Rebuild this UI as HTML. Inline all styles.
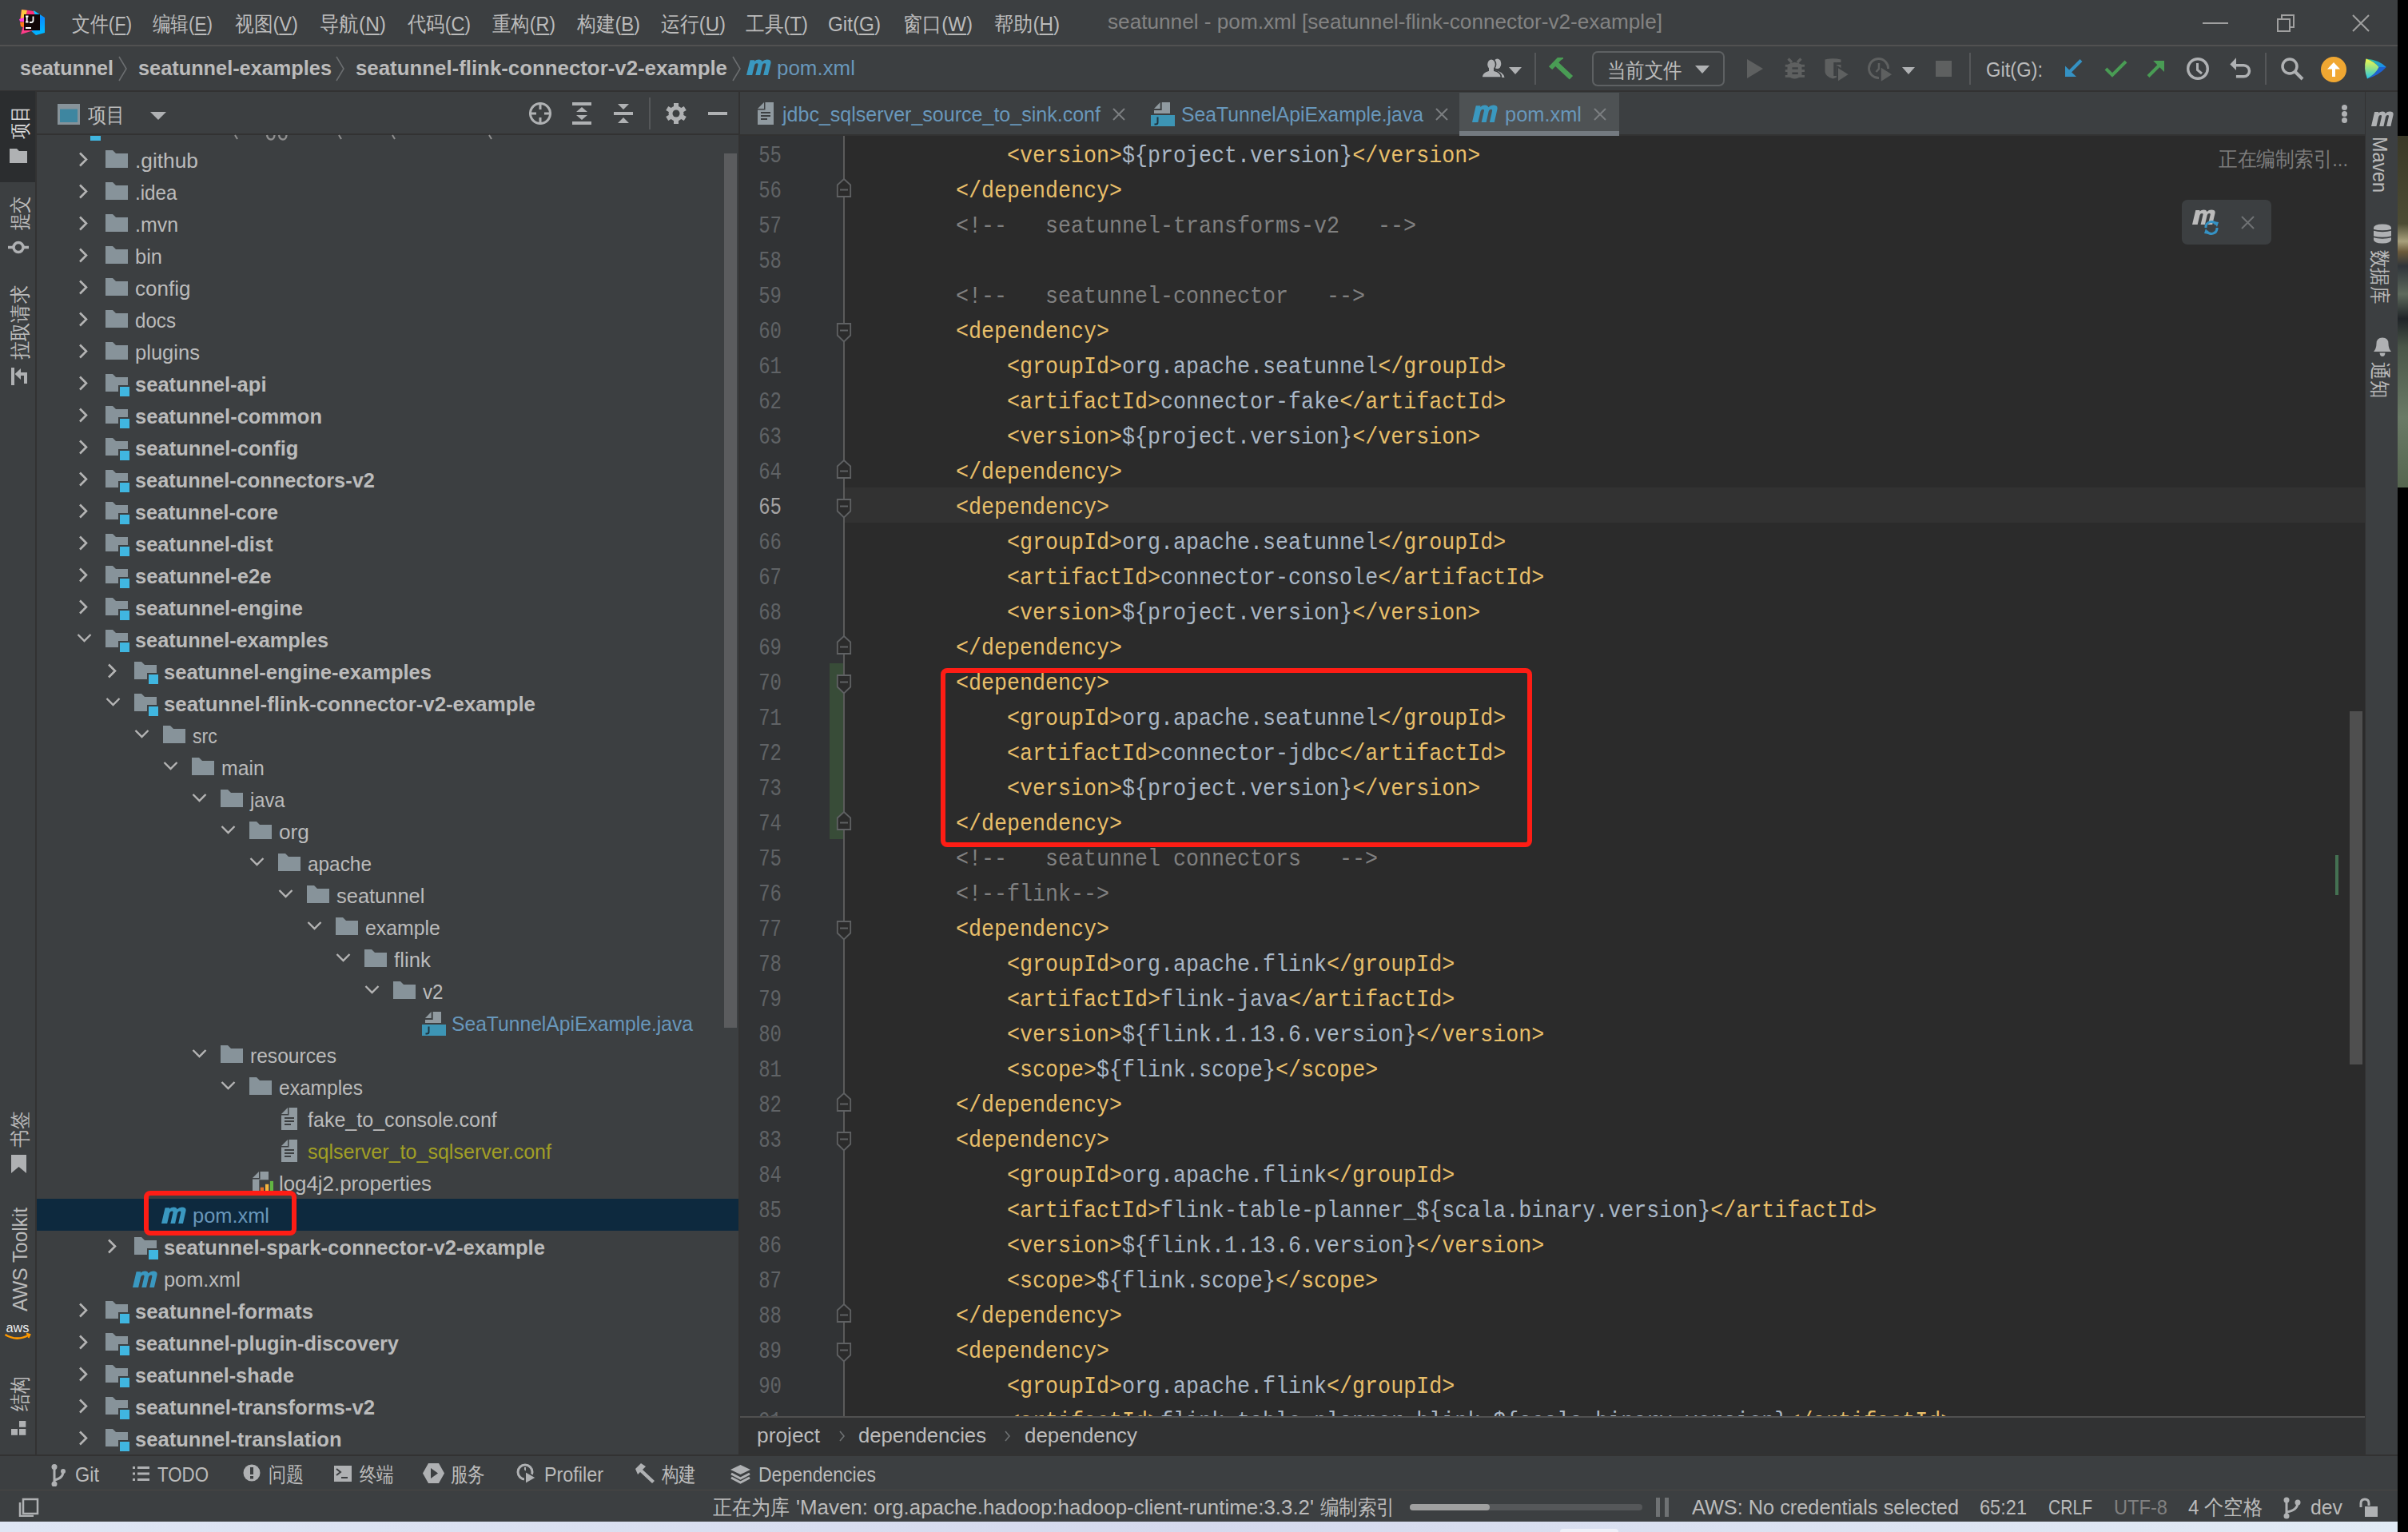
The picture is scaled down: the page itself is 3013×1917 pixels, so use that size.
<!DOCTYPE html>
<html><head><meta charset="utf-8"><style>
html,body{margin:0;padding:0;width:3013px;height:1917px;overflow:hidden;background:#000;}
div,svg{box-sizing:border-box;}
</style></head><body>
<div style="position:absolute;left:0px;top:0px;width:3000px;height:1904px;background:#3c3f41;"></div>
<div style="position:absolute;left:3000px;top:170px;width:13px;height:440px;background:linear-gradient(180deg,#3a3826 0%,#4d4c34 25%,#a8a07c 30%,#6b5a3a 33%,#30353a 37%,#5e6a5c 45%,#202428 52%,#4a5648 60%,#6a7a66 80%,#56664f 100%);"></div>
<div style="position:absolute;left:0px;top:1904px;width:3000px;height:13px;background:linear-gradient(90deg,#dfe6f4,#d5d9ed 50%,#e2ebf5);"></div>
<div style="position:absolute;left:1952px;top:1913px;width:73px;height:4px;background:#eef0f8;border-radius:6px 6px 0 0"></div>
<div style="position:absolute;left:0px;top:56px;width:3000px;height:2px;background:#515151;"></div>
<svg style="position:absolute;left:23px;top:11px;" width="34" height="34" viewBox="0 0 34 34">
<defs><linearGradient id="lgb" x1="0" y1="0" x2="0.3" y2="1"><stop offset="0" stop-color="#00e5ff"/><stop offset="0.5" stop-color="#0a8cff"/><stop offset="1" stop-color="#00b4ff"/></linearGradient></defs>
<polygon points="19,2 33,11 33,30 22,33 14,26 20,16" fill="url(#lgb)"/>
<polygon points="4,1 13,2 19,3 21,8 12,10 2,14" fill="#ff2f7a"/>
<polygon points="4,1 11,2 9,9 3,14" fill="#ffc83f"/>
<polygon points="1,13 10,10 13,17 2,16" fill="#ff3ddb"/>
<polygon points="2,17 12,16 12,26 3,22" fill="#ff7a1a"/>
<polygon points="3,32 6,22 13,25 22,26" fill="#ff3d8a"/>
<rect x="7" y="7" width="20" height="20" fill="#120606"/>
<path d="M9 9.5 H12.5 M10.7 9.5 V16.5 M9 16.5 H12.5" stroke="#fff" stroke-width="1.8"/>
<path d="M18.5 9.5 V14.5 Q18.5 17 16 17 H14" fill="none" stroke="#fff" stroke-width="1.8"/>
<rect x="9" y="23" width="7" height="2" fill="#fff"/>
</svg>
<div style="position:absolute;left:90px;top:9.99px;font:400 26px 'Liberation Sans', sans-serif;line-height:40px;color:#bbbbbb;white-space:pre;transform:scaleX(0.8802);transform-origin:0 0;">文件(<span style="text-decoration:underline;text-underline-offset:3px;text-decoration-thickness:2px">F</span>)</div>
<div style="position:absolute;left:191px;top:9.99px;font:400 26px 'Liberation Sans', sans-serif;line-height:40px;color:#bbbbbb;white-space:pre;transform:scaleX(0.8653);transform-origin:0 0;">编辑(<span style="text-decoration:underline;text-underline-offset:3px;text-decoration-thickness:2px">E</span>)</div>
<div style="position:absolute;left:294px;top:9.99px;font:400 26px 'Liberation Sans', sans-serif;line-height:40px;color:#bbbbbb;white-space:pre;transform:scaleX(0.9115);transform-origin:0 0;">视图(<span style="text-decoration:underline;text-underline-offset:3px;text-decoration-thickness:2px">V</span>)</div>
<div style="position:absolute;left:400px;top:9.99px;font:400 26px 'Liberation Sans', sans-serif;line-height:40px;color:#bbbbbb;white-space:pre;transform:scaleX(0.9422);transform-origin:0 0;">导航(<span style="text-decoration:underline;text-underline-offset:3px;text-decoration-thickness:2px">N</span>)</div>
<div style="position:absolute;left:510px;top:9.99px;font:400 26px 'Liberation Sans', sans-serif;line-height:40px;color:#bbbbbb;white-space:pre;transform:scaleX(0.8968);transform-origin:0 0;">代码(<span style="text-decoration:underline;text-underline-offset:3px;text-decoration-thickness:2px">C</span>)</div>
<div style="position:absolute;left:616px;top:9.99px;font:400 26px 'Liberation Sans', sans-serif;line-height:40px;color:#bbbbbb;white-space:pre;transform:scaleX(0.8968);transform-origin:0 0;">重构(<span style="text-decoration:underline;text-underline-offset:3px;text-decoration-thickness:2px">R</span>)</div>
<div style="position:absolute;left:722px;top:9.99px;font:400 26px 'Liberation Sans', sans-serif;line-height:40px;color:#bbbbbb;white-space:pre;transform:scaleX(0.9115);transform-origin:0 0;">构建(<span style="text-decoration:underline;text-underline-offset:3px;text-decoration-thickness:2px">B</span>)</div>
<div style="position:absolute;left:827px;top:9.99px;font:400 26px 'Liberation Sans', sans-serif;line-height:40px;color:#bbbbbb;white-space:pre;transform:scaleX(0.9195);transform-origin:0 0;">运行(<span style="text-decoration:underline;text-underline-offset:3px;text-decoration-thickness:2px">U</span>)</div>
<div style="position:absolute;left:933px;top:9.99px;font:400 26px 'Liberation Sans', sans-serif;line-height:40px;color:#bbbbbb;white-space:pre;transform:scaleX(0.9155);transform-origin:0 0;">工具(<span style="text-decoration:underline;text-underline-offset:3px;text-decoration-thickness:2px">T</span>)</div>
<div style="position:absolute;left:1036px;top:9.99px;font:400 26px 'Liberation Sans', sans-serif;line-height:40px;color:#bbbbbb;white-space:pre;transform:scaleX(0.9327);transform-origin:0 0;">Git(<span style="text-decoration:underline;text-underline-offset:3px;text-decoration-thickness:2px">G</span>)</div>
<div style="position:absolute;left:1130px;top:9.99px;font:400 26px 'Liberation Sans', sans-serif;line-height:40px;color:#bbbbbb;white-space:pre;transform:scaleX(0.9269);transform-origin:0 0;">窗口(<span style="text-decoration:underline;text-underline-offset:3px;text-decoration-thickness:2px">W</span>)</div>
<div style="position:absolute;left:1244px;top:9.99px;font:400 26px 'Liberation Sans', sans-serif;line-height:40px;color:#bbbbbb;white-space:pre;transform:scaleX(0.9308);transform-origin:0 0;">帮助(<span style="text-decoration:underline;text-underline-offset:3px;text-decoration-thickness:2px">H</span>)</div>
<div style="position:absolute;left:1386px;top:6.99px;font:400 26px 'Liberation Sans', sans-serif;line-height:40px;color:#838383;white-space:pre;transform:scaleX(1.0068);transform-origin:0 0;">seatunnel - pom.xml [seatunnel-flink-connector-v2-example]</div>
<div style="position:absolute;left:2756px;top:28px;width:32px;height:2px;background:#a0a0a0;"></div>
<svg style="position:absolute;left:2849px;top:18px;" width="24" height="22" viewBox="0 0 24 22"><rect x="1" y="6" width="15" height="15" fill="none" stroke="#a0a0a0" stroke-width="2"/><path d="M6 6 V1 H21 V16 H16" fill="none" stroke="#a0a0a0" stroke-width="2"/></svg>
<svg style="position:absolute;left:2943px;top:18px;" width="22" height="22" viewBox="0 0 22 22"><path d="M1 1 L21 21 M21 1 L1 21" stroke="#a0a0a0" stroke-width="2"/></svg>
<div style="position:absolute;left:0px;top:113px;width:3000px;height:2px;background:#323232;"></div>
<div style="position:absolute;left:25px;top:64.99px;font:700 26px 'Liberation Sans', sans-serif;line-height:40px;color:#bbbbbb;white-space:pre;transform:scaleX(0.9640);transform-origin:0 0;">seatunnel</div>
<div style="position:absolute;left:173px;top:64.99px;font:700 26px 'Liberation Sans', sans-serif;line-height:40px;color:#bbbbbb;white-space:pre;transform:scaleX(0.9736);transform-origin:0 0;">seatunnel-examples</div>
<div style="position:absolute;left:445px;top:64.99px;font:700 26px 'Liberation Sans', sans-serif;line-height:40px;color:#bbbbbb;white-space:pre;transform:scaleX(0.9933);transform-origin:0 0;">seatunnel-flink-connector-v2-example</div>
<svg style="position:absolute;left:148px;top:70px;" width="12" height="32" viewBox="0 0 12 32"><path d="M1 1 L10 16 L1 31" fill="none" stroke="#6b6e70" stroke-width="1.6"/></svg>
<svg style="position:absolute;left:420px;top:70px;" width="12" height="32" viewBox="0 0 12 32"><path d="M1 1 L10 16 L1 31" fill="none" stroke="#6b6e70" stroke-width="1.6"/></svg>
<svg style="position:absolute;left:916px;top:70px;" width="12" height="32" viewBox="0 0 12 32"><path d="M1 1 L10 16 L1 31" fill="none" stroke="#6b6e70" stroke-width="1.6"/></svg>
<div style="position:absolute;left:972px;top:64.99px;font:400 26px 'Liberation Sans', sans-serif;line-height:40px;color:#6897bb;white-space:pre;transform:scaleX(0.9975);transform-origin:0 0;">pom.xml</div>
<!--nav-right-->
<div style="position:absolute;left:44px;top:114px;width:2px;height:1706px;background:#323232;"></div>
<div style="position:absolute;left:0px;top:114px;width:44px;height:114px;background:#2b2d2f;"></div>
<div style="position:absolute;left:46px;top:167px;width:878px;height:2px;background:#323232;"></div>
<div style="position:absolute;left:924px;top:114px;width:2px;height:1706px;background:#323232;"></div>
<div style="position:absolute;left:926px;top:168px;width:2034px;height:2px;background:#323232;"></div>
<div style="position:absolute;left:926px;top:170px;width:130px;height:1602px;background:#313335;"></div>
<div style="position:absolute;left:1056px;top:170px;width:1904px;height:1602px;background:#2b2b2b;"></div>
<div style="position:absolute;left:1056px;top:610px;width:1904px;height:44px;background:#323232;"></div>
<div style="position:absolute;left:926px;top:1772px;width:2034px;height:2px;background:#505050;"></div>
<div style="position:absolute;left:926px;top:1774px;width:2034px;height:46px;background:#313233;"></div>
<div style="position:absolute;left:2959px;top:114px;width:1px;height:1706px;background:#323232;"></div>
<div style="position:absolute;left:0px;top:1820px;width:3000px;height:2px;background:#323232;"></div>
<div style="position:absolute;left:0px;top:1864px;width:3000px;height:1px;background:#4a4744;"></div>
<div style="position:absolute;left:46px;top:1500px;width:878px;height:40px;background:#0d293e;"></div>
<div style="position:absolute;left:113px;top:170px;width:13px;height:6px;background:#40b6e0;"></div>
<svg style="position:absolute;left:330px;top:168px;" width="32" height="9" viewBox="0 0 32 9"><path d="M4 1 Q5 6.5 9 6.5 Q13 6.5 13.5 1 M19 1 Q20 6.5 24 6.5 Q28 6.5 28.5 1" fill="none" stroke="#8f8f8f" stroke-width="2.4"/></svg>
<svg style="position:absolute;left:293px;top:168px;" width="6" height="8" viewBox="0 0 6 8"><path d="M1 1 L4 6" stroke="#8f8f8f" stroke-width="2"/></svg>
<svg style="position:absolute;left:423px;top:168px;" width="6" height="8" viewBox="0 0 6 8"><path d="M1 1 L4 6" stroke="#8f8f8f" stroke-width="2"/></svg>
<svg style="position:absolute;left:490px;top:168px;" width="6" height="8" viewBox="0 0 6 8"><path d="M1 1 L4 6" stroke="#8f8f8f" stroke-width="2"/></svg>
<svg style="position:absolute;left:611px;top:168px;" width="6" height="8" viewBox="0 0 6 8"><path d="M1 1 L4 6" stroke="#8f8f8f" stroke-width="2"/></svg>
<svg style="position:absolute;left:98px;top:190px;" width="13" height="20" viewBox="0 0 13 20"><path d="M2 1.5 L10 9.5 L2 17.5" fill="none" stroke="#b4b4b4" stroke-width="2.6"/></svg>
<svg style="position:absolute;left:132px;top:188px;" width="28" height="22" viewBox="0 0 28 22"><path d="M0 0 H9 L13 4 H28 V22 H0 Z" fill="#87939a"/></svg>
<div style="position:absolute;left:169px;top:180.99px;font:400 26px 'Liberation Sans', sans-serif;line-height:40px;color:#bbbbbb;white-space:pre;transform:scaleX(1.0118);transform-origin:0 0;">.github</div>
<svg style="position:absolute;left:98px;top:230px;" width="13" height="20" viewBox="0 0 13 20"><path d="M2 1.5 L10 9.5 L2 17.5" fill="none" stroke="#b4b4b4" stroke-width="2.6"/></svg>
<svg style="position:absolute;left:132px;top:228px;" width="28" height="22" viewBox="0 0 28 22"><path d="M0 0 H9 L13 4 H28 V22 H0 Z" fill="#87939a"/></svg>
<div style="position:absolute;left:169px;top:220.99px;font:400 26px 'Liberation Sans', sans-serif;line-height:40px;color:#bbbbbb;white-space:pre;transform:scaleX(0.9310);transform-origin:0 0;">.idea</div>
<svg style="position:absolute;left:98px;top:270px;" width="13" height="20" viewBox="0 0 13 20"><path d="M2 1.5 L10 9.5 L2 17.5" fill="none" stroke="#b4b4b4" stroke-width="2.6"/></svg>
<svg style="position:absolute;left:132px;top:268px;" width="28" height="22" viewBox="0 0 28 22"><path d="M0 0 H9 L13 4 H28 V22 H0 Z" fill="#87939a"/></svg>
<div style="position:absolute;left:169px;top:260.99px;font:400 26px 'Liberation Sans', sans-serif;line-height:40px;color:#bbbbbb;white-space:pre;transform:scaleX(0.9584);transform-origin:0 0;">.mvn</div>
<svg style="position:absolute;left:98px;top:310px;" width="13" height="20" viewBox="0 0 13 20"><path d="M2 1.5 L10 9.5 L2 17.5" fill="none" stroke="#b4b4b4" stroke-width="2.6"/></svg>
<svg style="position:absolute;left:132px;top:308px;" width="28" height="22" viewBox="0 0 28 22"><path d="M0 0 H9 L13 4 H28 V22 H0 Z" fill="#87939a"/></svg>
<div style="position:absolute;left:169px;top:300.99px;font:400 26px 'Liberation Sans', sans-serif;line-height:40px;color:#bbbbbb;white-space:pre;transform:scaleX(0.9797);transform-origin:0 0;">bin</div>
<svg style="position:absolute;left:98px;top:350px;" width="13" height="20" viewBox="0 0 13 20"><path d="M2 1.5 L10 9.5 L2 17.5" fill="none" stroke="#b4b4b4" stroke-width="2.6"/></svg>
<svg style="position:absolute;left:132px;top:348px;" width="28" height="22" viewBox="0 0 28 22"><path d="M0 0 H9 L13 4 H28 V22 H0 Z" fill="#87939a"/></svg>
<div style="position:absolute;left:169px;top:340.99px;font:400 26px 'Liberation Sans', sans-serif;line-height:40px;color:#bbbbbb;white-space:pre;transform:scaleX(1.0016);transform-origin:0 0;">config</div>
<svg style="position:absolute;left:98px;top:390px;" width="13" height="20" viewBox="0 0 13 20"><path d="M2 1.5 L10 9.5 L2 17.5" fill="none" stroke="#b4b4b4" stroke-width="2.6"/></svg>
<svg style="position:absolute;left:132px;top:388px;" width="28" height="22" viewBox="0 0 28 22"><path d="M0 0 H9 L13 4 H28 V22 H0 Z" fill="#87939a"/></svg>
<div style="position:absolute;left:169px;top:380.99px;font:400 26px 'Liberation Sans', sans-serif;line-height:40px;color:#bbbbbb;white-space:pre;transform:scaleX(0.9286);transform-origin:0 0;">docs</div>
<svg style="position:absolute;left:98px;top:430px;" width="13" height="20" viewBox="0 0 13 20"><path d="M2 1.5 L10 9.5 L2 17.5" fill="none" stroke="#b4b4b4" stroke-width="2.6"/></svg>
<svg style="position:absolute;left:132px;top:428px;" width="28" height="22" viewBox="0 0 28 22"><path d="M0 0 H9 L13 4 H28 V22 H0 Z" fill="#87939a"/></svg>
<div style="position:absolute;left:169px;top:420.99px;font:400 26px 'Liberation Sans', sans-serif;line-height:40px;color:#bbbbbb;white-space:pre;transform:scaleX(0.9829);transform-origin:0 0;">plugins</div>
<svg style="position:absolute;left:98px;top:470px;" width="13" height="20" viewBox="0 0 13 20"><path d="M2 1.5 L10 9.5 L2 17.5" fill="none" stroke="#b4b4b4" stroke-width="2.6"/></svg>
<svg style="position:absolute;left:132px;top:468px;" width="31" height="29" viewBox="0 0 31 29"><path d="M0 0 H9 L13 4 H28 V14 H16 V22 H0 Z" fill="#87939a"/><rect x="18" y="16" width="12" height="12" fill="#40b6e0"/></svg>
<div style="position:absolute;left:169px;top:460.99px;font:700 26px 'Liberation Sans', sans-serif;line-height:40px;color:#bbbbbb;white-space:pre;transform:scaleX(0.9815);transform-origin:0 0;">seatunnel-api</div>
<svg style="position:absolute;left:98px;top:510px;" width="13" height="20" viewBox="0 0 13 20"><path d="M2 1.5 L10 9.5 L2 17.5" fill="none" stroke="#b4b4b4" stroke-width="2.6"/></svg>
<svg style="position:absolute;left:132px;top:508px;" width="31" height="29" viewBox="0 0 31 29"><path d="M0 0 H9 L13 4 H28 V14 H16 V22 H0 Z" fill="#87939a"/><rect x="18" y="16" width="12" height="12" fill="#40b6e0"/></svg>
<div style="position:absolute;left:169px;top:500.99px;font:700 26px 'Liberation Sans', sans-serif;line-height:40px;color:#bbbbbb;white-space:pre;transform:scaleX(0.9816);transform-origin:0 0;">seatunnel-common</div>
<svg style="position:absolute;left:98px;top:550px;" width="13" height="20" viewBox="0 0 13 20"><path d="M2 1.5 L10 9.5 L2 17.5" fill="none" stroke="#b4b4b4" stroke-width="2.6"/></svg>
<svg style="position:absolute;left:132px;top:548px;" width="31" height="29" viewBox="0 0 31 29"><path d="M0 0 H9 L13 4 H28 V14 H16 V22 H0 Z" fill="#87939a"/><rect x="18" y="16" width="12" height="12" fill="#40b6e0"/></svg>
<div style="position:absolute;left:169px;top:540.99px;font:700 26px 'Liberation Sans', sans-serif;line-height:40px;color:#bbbbbb;white-space:pre;transform:scaleX(0.9826);transform-origin:0 0;">seatunnel-config</div>
<svg style="position:absolute;left:98px;top:590px;" width="13" height="20" viewBox="0 0 13 20"><path d="M2 1.5 L10 9.5 L2 17.5" fill="none" stroke="#b4b4b4" stroke-width="2.6"/></svg>
<svg style="position:absolute;left:132px;top:588px;" width="31" height="29" viewBox="0 0 31 29"><path d="M0 0 H9 L13 4 H28 V14 H16 V22 H0 Z" fill="#87939a"/><rect x="18" y="16" width="12" height="12" fill="#40b6e0"/></svg>
<div style="position:absolute;left:169px;top:580.99px;font:700 26px 'Liberation Sans', sans-serif;line-height:40px;color:#bbbbbb;white-space:pre;transform:scaleX(0.9742);transform-origin:0 0;">seatunnel-connectors-v2</div>
<svg style="position:absolute;left:98px;top:630px;" width="13" height="20" viewBox="0 0 13 20"><path d="M2 1.5 L10 9.5 L2 17.5" fill="none" stroke="#b4b4b4" stroke-width="2.6"/></svg>
<svg style="position:absolute;left:132px;top:628px;" width="31" height="29" viewBox="0 0 31 29"><path d="M0 0 H9 L13 4 H28 V14 H16 V22 H0 Z" fill="#87939a"/><rect x="18" y="16" width="12" height="12" fill="#40b6e0"/></svg>
<div style="position:absolute;left:169px;top:620.99px;font:700 26px 'Liberation Sans', sans-serif;line-height:40px;color:#bbbbbb;white-space:pre;transform:scaleX(0.9678);transform-origin:0 0;">seatunnel-core</div>
<svg style="position:absolute;left:98px;top:670px;" width="13" height="20" viewBox="0 0 13 20"><path d="M2 1.5 L10 9.5 L2 17.5" fill="none" stroke="#b4b4b4" stroke-width="2.6"/></svg>
<svg style="position:absolute;left:132px;top:668px;" width="31" height="29" viewBox="0 0 31 29"><path d="M0 0 H9 L13 4 H28 V14 H16 V22 H0 Z" fill="#87939a"/><rect x="18" y="16" width="12" height="12" fill="#40b6e0"/></svg>
<div style="position:absolute;left:169px;top:660.99px;font:700 26px 'Liberation Sans', sans-serif;line-height:40px;color:#bbbbbb;white-space:pre;transform:scaleX(0.9787);transform-origin:0 0;">seatunnel-dist</div>
<svg style="position:absolute;left:98px;top:710px;" width="13" height="20" viewBox="0 0 13 20"><path d="M2 1.5 L10 9.5 L2 17.5" fill="none" stroke="#b4b4b4" stroke-width="2.6"/></svg>
<svg style="position:absolute;left:132px;top:708px;" width="31" height="29" viewBox="0 0 31 29"><path d="M0 0 H9 L13 4 H28 V14 H16 V22 H0 Z" fill="#87939a"/><rect x="18" y="16" width="12" height="12" fill="#40b6e0"/></svg>
<div style="position:absolute;left:169px;top:700.99px;font:700 26px 'Liberation Sans', sans-serif;line-height:40px;color:#bbbbbb;white-space:pre;transform:scaleX(0.9827);transform-origin:0 0;">seatunnel-e2e</div>
<svg style="position:absolute;left:98px;top:750px;" width="13" height="20" viewBox="0 0 13 20"><path d="M2 1.5 L10 9.5 L2 17.5" fill="none" stroke="#b4b4b4" stroke-width="2.6"/></svg>
<svg style="position:absolute;left:132px;top:748px;" width="31" height="29" viewBox="0 0 31 29"><path d="M0 0 H9 L13 4 H28 V14 H16 V22 H0 Z" fill="#87939a"/><rect x="18" y="16" width="12" height="12" fill="#40b6e0"/></svg>
<div style="position:absolute;left:169px;top:740.99px;font:700 26px 'Liberation Sans', sans-serif;line-height:40px;color:#bbbbbb;white-space:pre;transform:scaleX(0.9821);transform-origin:0 0;">seatunnel-engine</div>
<svg style="position:absolute;left:95.5px;top:792px;" width="19" height="13" viewBox="0 0 19 13"><path d="M1.5 2 L9.5 10 L17.5 2" fill="none" stroke="#b4b4b4" stroke-width="2.4"/></svg>
<svg style="position:absolute;left:132px;top:788px;" width="31" height="29" viewBox="0 0 31 29"><path d="M0 0 H9 L13 4 H28 V14 H16 V22 H0 Z" fill="#87939a"/><rect x="18" y="16" width="12" height="12" fill="#40b6e0"/></svg>
<div style="position:absolute;left:169px;top:780.99px;font:700 26px 'Liberation Sans', sans-serif;line-height:40px;color:#bbbbbb;white-space:pre;transform:scaleX(0.9736);transform-origin:0 0;">seatunnel-examples</div>
<svg style="position:absolute;left:134px;top:830px;" width="13" height="20" viewBox="0 0 13 20"><path d="M2 1.5 L10 9.5 L2 17.5" fill="none" stroke="#b4b4b4" stroke-width="2.6"/></svg>
<svg style="position:absolute;left:168px;top:828px;" width="31" height="29" viewBox="0 0 31 29"><path d="M0 0 H9 L13 4 H28 V14 H16 V22 H0 Z" fill="#87939a"/><rect x="18" y="16" width="12" height="12" fill="#40b6e0"/></svg>
<div style="position:absolute;left:205px;top:820.99px;font:700 26px 'Liberation Sans', sans-serif;line-height:40px;color:#bbbbbb;white-space:pre;transform:scaleX(0.9824);transform-origin:0 0;">seatunnel-engine-examples</div>
<svg style="position:absolute;left:131.5px;top:872px;" width="19" height="13" viewBox="0 0 19 13"><path d="M1.5 2 L9.5 10 L17.5 2" fill="none" stroke="#b4b4b4" stroke-width="2.4"/></svg>
<svg style="position:absolute;left:168px;top:868px;" width="31" height="29" viewBox="0 0 31 29"><path d="M0 0 H9 L13 4 H28 V14 H16 V22 H0 Z" fill="#87939a"/><rect x="18" y="16" width="12" height="12" fill="#40b6e0"/></svg>
<div style="position:absolute;left:205px;top:860.99px;font:700 26px 'Liberation Sans', sans-serif;line-height:40px;color:#bbbbbb;white-space:pre;transform:scaleX(0.9933);transform-origin:0 0;">seatunnel-flink-connector-v2-example</div>
<svg style="position:absolute;left:167.5px;top:912px;" width="19" height="13" viewBox="0 0 19 13"><path d="M1.5 2 L9.5 10 L17.5 2" fill="none" stroke="#b4b4b4" stroke-width="2.4"/></svg>
<svg style="position:absolute;left:204px;top:908px;" width="28" height="22" viewBox="0 0 28 22"><path d="M0 0 H9 L13 4 H28 V22 H0 Z" fill="#87939a"/></svg>
<div style="position:absolute;left:241px;top:900.99px;font:400 26px 'Liberation Sans', sans-serif;line-height:40px;color:#bbbbbb;white-space:pre;transform:scaleX(0.8854);transform-origin:0 0;">src</div>
<svg style="position:absolute;left:203.5px;top:952px;" width="19" height="13" viewBox="0 0 19 13"><path d="M1.5 2 L9.5 10 L17.5 2" fill="none" stroke="#b4b4b4" stroke-width="2.4"/></svg>
<svg style="position:absolute;left:240px;top:948px;" width="28" height="22" viewBox="0 0 28 22"><path d="M0 0 H9 L13 4 H28 V22 H0 Z" fill="#87939a"/></svg>
<div style="position:absolute;left:277px;top:940.99px;font:400 26px 'Liberation Sans', sans-serif;line-height:40px;color:#bbbbbb;white-space:pre;transform:scaleX(0.9528);transform-origin:0 0;">main</div>
<svg style="position:absolute;left:239.5px;top:992px;" width="19" height="13" viewBox="0 0 19 13"><path d="M1.5 2 L9.5 10 L17.5 2" fill="none" stroke="#b4b4b4" stroke-width="2.4"/></svg>
<svg style="position:absolute;left:276px;top:988px;" width="28" height="22" viewBox="0 0 28 22"><path d="M0 0 H9 L13 4 H28 V22 H0 Z" fill="#87939a"/></svg>
<div style="position:absolute;left:313px;top:980.99px;font:400 26px 'Liberation Sans', sans-serif;line-height:40px;color:#bbbbbb;white-space:pre;transform:scaleX(0.9119);transform-origin:0 0;">java</div>
<svg style="position:absolute;left:275.5px;top:1032px;" width="19" height="13" viewBox="0 0 19 13"><path d="M1.5 2 L9.5 10 L17.5 2" fill="none" stroke="#b4b4b4" stroke-width="2.4"/></svg>
<svg style="position:absolute;left:312px;top:1028px;" width="28" height="22" viewBox="0 0 28 22"><path d="M0 0 H9 L13 4 H28 V22 H0 Z" fill="#87939a"/></svg>
<div style="position:absolute;left:349px;top:1020.99px;font:400 26px 'Liberation Sans', sans-serif;line-height:40px;color:#bbbbbb;white-space:pre;transform:scaleX(1.0059);transform-origin:0 0;">org</div>
<svg style="position:absolute;left:311.5px;top:1072px;" width="19" height="13" viewBox="0 0 19 13"><path d="M1.5 2 L9.5 10 L17.5 2" fill="none" stroke="#b4b4b4" stroke-width="2.4"/></svg>
<svg style="position:absolute;left:348px;top:1068px;" width="28" height="22" viewBox="0 0 28 22"><path d="M0 0 H9 L13 4 H28 V22 H0 Z" fill="#87939a"/></svg>
<div style="position:absolute;left:385px;top:1060.99px;font:400 26px 'Liberation Sans', sans-serif;line-height:40px;color:#bbbbbb;white-space:pre;transform:scaleX(0.9377);transform-origin:0 0;">apache</div>
<svg style="position:absolute;left:347.5px;top:1112px;" width="19" height="13" viewBox="0 0 19 13"><path d="M1.5 2 L9.5 10 L17.5 2" fill="none" stroke="#b4b4b4" stroke-width="2.4"/></svg>
<svg style="position:absolute;left:384px;top:1108px;" width="28" height="22" viewBox="0 0 28 22"><path d="M0 0 H9 L13 4 H28 V22 H0 Z" fill="#87939a"/></svg>
<div style="position:absolute;left:421px;top:1100.99px;font:400 26px 'Liberation Sans', sans-serif;line-height:40px;color:#bbbbbb;white-space:pre;transform:scaleX(0.9790);transform-origin:0 0;">seatunnel</div>
<svg style="position:absolute;left:383.5px;top:1152px;" width="19" height="13" viewBox="0 0 19 13"><path d="M1.5 2 L9.5 10 L17.5 2" fill="none" stroke="#b4b4b4" stroke-width="2.4"/></svg>
<svg style="position:absolute;left:420px;top:1148px;" width="28" height="22" viewBox="0 0 28 22"><path d="M0 0 H9 L13 4 H28 V22 H0 Z" fill="#87939a"/></svg>
<div style="position:absolute;left:457px;top:1140.99px;font:400 26px 'Liberation Sans', sans-serif;line-height:40px;color:#bbbbbb;white-space:pre;transform:scaleX(0.9544);transform-origin:0 0;">example</div>
<svg style="position:absolute;left:419.5px;top:1192px;" width="19" height="13" viewBox="0 0 19 13"><path d="M1.5 2 L9.5 10 L17.5 2" fill="none" stroke="#b4b4b4" stroke-width="2.4"/></svg>
<svg style="position:absolute;left:456px;top:1188px;" width="28" height="22" viewBox="0 0 28 22"><path d="M0 0 H9 L13 4 H28 V22 H0 Z" fill="#87939a"/></svg>
<div style="position:absolute;left:493px;top:1180.99px;font:400 26px 'Liberation Sans', sans-serif;line-height:40px;color:#bbbbbb;white-space:pre;transform:scaleX(0.9924);transform-origin:0 0;">flink</div>
<svg style="position:absolute;left:455.5px;top:1232px;" width="19" height="13" viewBox="0 0 19 13"><path d="M1.5 2 L9.5 10 L17.5 2" fill="none" stroke="#b4b4b4" stroke-width="2.4"/></svg>
<svg style="position:absolute;left:492px;top:1228px;" width="28" height="22" viewBox="0 0 28 22"><path d="M0 0 H9 L13 4 H28 V22 H0 Z" fill="#87939a"/></svg>
<div style="position:absolute;left:529px;top:1220.99px;font:400 26px 'Liberation Sans', sans-serif;line-height:40px;color:#bbbbbb;white-space:pre;transform:scaleX(0.9320);transform-origin:0 0;">v2</div>
<svg style="position:absolute;left:528px;top:1266px;" width="30" height="30" viewBox="0 0 30 30"><path d="M4 8 L11.7 0 V8 Z" fill="#909aa0"/><path d="M13.7 0 H24 V14 H4 V10 H13.7 Z" fill="#909aa0"/><rect x="0" y="16" width="30" height="14" fill="#3d95b5"/><path d="M8.5 18.5 V25.3 Q8.5 27.5 6.2 27.5 H4.5" fill="none" stroke="#1f3540" stroke-width="2"/></svg>
<div style="position:absolute;left:565px;top:1260.99px;font:400 26px 'Liberation Sans', sans-serif;line-height:40px;color:#6897bb;white-space:pre;transform:scaleX(0.9483);transform-origin:0 0;">SeaTunnelApiExample.java</div>
<svg style="position:absolute;left:239.5px;top:1312px;" width="19" height="13" viewBox="0 0 19 13"><path d="M1.5 2 L9.5 10 L17.5 2" fill="none" stroke="#b4b4b4" stroke-width="2.4"/></svg>
<svg style="position:absolute;left:276px;top:1308px;" width="28" height="22" viewBox="0 0 28 22"><path d="M0 0 H9 L13 4 H28 V22 H0 Z" fill="#87939a"/></svg>
<div style="position:absolute;left:313px;top:1300.99px;font:400 26px 'Liberation Sans', sans-serif;line-height:40px;color:#bbbbbb;white-space:pre;transform:scaleX(0.9461);transform-origin:0 0;">resources</div>
<svg style="position:absolute;left:275.5px;top:1352px;" width="19" height="13" viewBox="0 0 19 13"><path d="M1.5 2 L9.5 10 L17.5 2" fill="none" stroke="#b4b4b4" stroke-width="2.4"/></svg>
<svg style="position:absolute;left:312px;top:1348px;" width="28" height="22" viewBox="0 0 28 22"><path d="M0 0 H9 L13 4 H28 V22 H0 Z" fill="#87939a"/></svg>
<div style="position:absolute;left:349px;top:1340.99px;font:400 26px 'Liberation Sans', sans-serif;line-height:40px;color:#bbbbbb;white-space:pre;transform:scaleX(0.9436);transform-origin:0 0;">examples</div>
<svg style="position:absolute;left:352px;top:1386px;" width="20" height="28" viewBox="0 0 20 28"><path d="M0 8 L8 0 V8 Z" fill="#909aa0"/><path d="M9.5 0 H20 V28 H0 V9.5 H9.5 Z" fill="#909aa0"/><path d="M4 13 H16 M4 17 H16 M4 21 H12" stroke="#3c3f41" stroke-width="2"/></svg>
<div style="position:absolute;left:385px;top:1380.99px;font:400 26px 'Liberation Sans', sans-serif;line-height:40px;color:#bbbbbb;white-space:pre;transform:scaleX(0.9636);transform-origin:0 0;">fake_to_console.conf</div>
<svg style="position:absolute;left:352px;top:1426px;" width="20" height="28" viewBox="0 0 20 28"><path d="M0 8 L8 0 V8 Z" fill="#909aa0"/><path d="M9.5 0 H20 V28 H0 V9.5 H9.5 Z" fill="#909aa0"/><path d="M4 13 H16 M4 17 H16 M4 21 H12" stroke="#3c3f41" stroke-width="2"/></svg>
<div style="position:absolute;left:385px;top:1420.99px;font:400 26px 'Liberation Sans', sans-serif;line-height:40px;color:#a19f25;white-space:pre;transform:scaleX(0.9637);transform-origin:0 0;">sqlserver_to_sqlserver.conf</div>
<svg style="position:absolute;left:316px;top:1466px;" width="27" height="28" viewBox="0 0 27 28"><path d="M0 8 L8 0 V8 Z" fill="#909aa0"/><path d="M9.5 0 H20 V10.3 H8.3 V28 H0 V9.5 H9.5 Z" fill="#909aa0"/><rect x="9.7" y="19.7" width="4.3" height="8.3" fill="#e86f24"/><rect x="16" y="15.8" width="4.2" height="12.2" fill="#f4b63f"/><rect x="21.9" y="11.9" width="4.1" height="16.1" fill="#62b543"/></svg>
<div style="position:absolute;left:349px;top:1460.99px;font:400 26px 'Liberation Sans', sans-serif;line-height:40px;color:#bbbbbb;white-space:pre;transform:scaleX(0.9936);transform-origin:0 0;">log4j2.properties</div>
<svg style="position:absolute;left:202px;top:1510px" width="31" height="21" viewBox="0 0 29 21" preserveAspectRatio="none"><path d="M0 21 L4.3 1.2 H9.5 L9.2 2.8 Q11.5 0.5 14.5 0.5 Q17.8 0.5 18.3 3.2 Q20.8 0.5 24 0.5 Q29.5 0.5 28.5 5.5 L25.2 21 H19.8 L22.7 7.5 Q23.1 5.5 21.4 5.5 Q19.3 5.5 18.7 8 L16 21 H10.6 L13.5 7.5 Q13.9 5.5 12.2 5.5 Q10.1 5.5 9.5 8 L6.7 21 Z" fill="#3a98c0"/></svg>
<div style="position:absolute;left:241px;top:1500.99px;font:400 26px 'Liberation Sans', sans-serif;line-height:40px;color:#6897bb;white-space:pre;transform:scaleX(0.9771);transform-origin:0 0;">pom.xml</div>
<svg style="position:absolute;left:134px;top:1550px;" width="13" height="20" viewBox="0 0 13 20"><path d="M2 1.5 L10 9.5 L2 17.5" fill="none" stroke="#b4b4b4" stroke-width="2.6"/></svg>
<svg style="position:absolute;left:168px;top:1548px;" width="31" height="29" viewBox="0 0 31 29"><path d="M0 0 H9 L13 4 H28 V14 H16 V22 H0 Z" fill="#87939a"/><rect x="18" y="16" width="12" height="12" fill="#40b6e0"/></svg>
<div style="position:absolute;left:205px;top:1540.99px;font:700 26px 'Liberation Sans', sans-serif;line-height:40px;color:#bbbbbb;white-space:pre;transform:scaleX(0.9854);transform-origin:0 0;">seatunnel-spark-connector-v2-example</div>
<svg style="position:absolute;left:166px;top:1590px" width="31" height="21" viewBox="0 0 29 21" preserveAspectRatio="none"><path d="M0 21 L4.3 1.2 H9.5 L9.2 2.8 Q11.5 0.5 14.5 0.5 Q17.8 0.5 18.3 3.2 Q20.8 0.5 24 0.5 Q29.5 0.5 28.5 5.5 L25.2 21 H19.8 L22.7 7.5 Q23.1 5.5 21.4 5.5 Q19.3 5.5 18.7 8 L16 21 H10.6 L13.5 7.5 Q13.9 5.5 12.2 5.5 Q10.1 5.5 9.5 8 L6.7 21 Z" fill="#3a98c0"/></svg>
<div style="position:absolute;left:205px;top:1580.99px;font:400 26px 'Liberation Sans', sans-serif;line-height:40px;color:#bbbbbb;white-space:pre;transform:scaleX(0.9751);transform-origin:0 0;">pom.xml</div>
<svg style="position:absolute;left:98px;top:1630px;" width="13" height="20" viewBox="0 0 13 20"><path d="M2 1.5 L10 9.5 L2 17.5" fill="none" stroke="#b4b4b4" stroke-width="2.6"/></svg>
<svg style="position:absolute;left:132px;top:1628px;" width="31" height="29" viewBox="0 0 31 29"><path d="M0 0 H9 L13 4 H28 V14 H16 V22 H0 Z" fill="#87939a"/><rect x="18" y="16" width="12" height="12" fill="#40b6e0"/></svg>
<div style="position:absolute;left:169px;top:1620.99px;font:700 26px 'Liberation Sans', sans-serif;line-height:40px;color:#bbbbbb;white-space:pre;transform:scaleX(0.9894);transform-origin:0 0;">seatunnel-formats</div>
<svg style="position:absolute;left:98px;top:1670px;" width="13" height="20" viewBox="0 0 13 20"><path d="M2 1.5 L10 9.5 L2 17.5" fill="none" stroke="#b4b4b4" stroke-width="2.6"/></svg>
<svg style="position:absolute;left:132px;top:1668px;" width="31" height="29" viewBox="0 0 31 29"><path d="M0 0 H9 L13 4 H28 V14 H16 V22 H0 Z" fill="#87939a"/><rect x="18" y="16" width="12" height="12" fill="#40b6e0"/></svg>
<div style="position:absolute;left:169px;top:1660.99px;font:700 26px 'Liberation Sans', sans-serif;line-height:40px;color:#bbbbbb;white-space:pre;transform:scaleX(0.9761);transform-origin:0 0;">seatunnel-plugin-discovery</div>
<svg style="position:absolute;left:98px;top:1710px;" width="13" height="20" viewBox="0 0 13 20"><path d="M2 1.5 L10 9.5 L2 17.5" fill="none" stroke="#b4b4b4" stroke-width="2.6"/></svg>
<svg style="position:absolute;left:132px;top:1708px;" width="31" height="29" viewBox="0 0 31 29"><path d="M0 0 H9 L13 4 H28 V14 H16 V22 H0 Z" fill="#87939a"/><rect x="18" y="16" width="12" height="12" fill="#40b6e0"/></svg>
<div style="position:absolute;left:169px;top:1700.99px;font:700 26px 'Liberation Sans', sans-serif;line-height:40px;color:#bbbbbb;white-space:pre;transform:scaleX(0.9699);transform-origin:0 0;">seatunnel-shade</div>
<svg style="position:absolute;left:98px;top:1750px;" width="13" height="20" viewBox="0 0 13 20"><path d="M2 1.5 L10 9.5 L2 17.5" fill="none" stroke="#b4b4b4" stroke-width="2.6"/></svg>
<svg style="position:absolute;left:132px;top:1748px;" width="31" height="29" viewBox="0 0 31 29"><path d="M0 0 H9 L13 4 H28 V14 H16 V22 H0 Z" fill="#87939a"/><rect x="18" y="16" width="12" height="12" fill="#40b6e0"/></svg>
<div style="position:absolute;left:169px;top:1740.99px;font:700 26px 'Liberation Sans', sans-serif;line-height:40px;color:#bbbbbb;white-space:pre;transform:scaleX(0.9887);transform-origin:0 0;">seatunnel-transforms-v2</div>
<svg style="position:absolute;left:98px;top:1790px;" width="13" height="20" viewBox="0 0 13 20"><path d="M2 1.5 L10 9.5 L2 17.5" fill="none" stroke="#b4b4b4" stroke-width="2.6"/></svg>
<svg style="position:absolute;left:132px;top:1788px;" width="31" height="29" viewBox="0 0 31 29"><path d="M0 0 H9 L13 4 H28 V14 H16 V22 H0 Z" fill="#87939a"/><rect x="18" y="16" width="12" height="12" fill="#40b6e0"/></svg>
<div style="position:absolute;left:169px;top:1780.99px;font:700 26px 'Liberation Sans', sans-serif;line-height:40px;color:#bbbbbb;white-space:pre;transform:scaleX(0.9831);transform-origin:0 0;">seatunnel-translation</div>
<div style="position:absolute;left:180px;top:1490px;width:191px;height:56px;border:6.5px solid #fe1d15;border-radius:8px;box-sizing:border-box"></div>
<div style="position:absolute;left:1038px;top:830px;width:17px;height:220px;background:#384c38;"></div>
<div style="position:absolute;left:1055px;top:170px;width:2px;height:1602px;background:#5b5b5b;"></div>
<svg style="position:absolute;left:1046px;top:404px;" width="20" height="26" viewBox="0 0 20 26"><path d="M1.8 1 H18.2 V15.5 L10 23.5 L1.8 15.5 Z" fill="#2b2b2b" stroke="#5f6163" stroke-width="1.8"/><path d="M5 9.5 H15" stroke="#5f6163" stroke-width="2"/></svg>
<svg style="position:absolute;left:1046px;top:624px;" width="20" height="26" viewBox="0 0 20 26"><path d="M1.8 1 H18.2 V15.5 L10 23.5 L1.8 15.5 Z" fill="#2b2b2b" stroke="#5f6163" stroke-width="1.8"/><path d="M5 9.5 H15" stroke="#5f6163" stroke-width="2"/></svg>
<svg style="position:absolute;left:1046px;top:844px;" width="20" height="26" viewBox="0 0 20 26"><path d="M1.8 1 H18.2 V15.5 L10 23.5 L1.8 15.5 Z" fill="#2b2b2b" stroke="#5f6163" stroke-width="1.8"/><path d="M5 9.5 H15" stroke="#5f6163" stroke-width="2"/></svg>
<svg style="position:absolute;left:1046px;top:1152px;" width="20" height="26" viewBox="0 0 20 26"><path d="M1.8 1 H18.2 V15.5 L10 23.5 L1.8 15.5 Z" fill="#2b2b2b" stroke="#5f6163" stroke-width="1.8"/><path d="M5 9.5 H15" stroke="#5f6163" stroke-width="2"/></svg>
<svg style="position:absolute;left:1046px;top:1416px;" width="20" height="26" viewBox="0 0 20 26"><path d="M1.8 1 H18.2 V15.5 L10 23.5 L1.8 15.5 Z" fill="#2b2b2b" stroke="#5f6163" stroke-width="1.8"/><path d="M5 9.5 H15" stroke="#5f6163" stroke-width="2"/></svg>
<svg style="position:absolute;left:1046px;top:1680px;" width="20" height="26" viewBox="0 0 20 26"><path d="M1.8 1 H18.2 V15.5 L10 23.5 L1.8 15.5 Z" fill="#2b2b2b" stroke="#5f6163" stroke-width="1.8"/><path d="M5 9.5 H15" stroke="#5f6163" stroke-width="2"/></svg>
<svg style="position:absolute;left:1046px;top:223px;" width="20" height="25" viewBox="0 0 20 25"><path d="M10 1 L18.2 8.5 V23 H1.8 V8.5 Z" fill="#2b2b2b" stroke="#5f6163" stroke-width="1.8"/><path d="M5 14.5 H15" stroke="#5f6163" stroke-width="2"/></svg>
<svg style="position:absolute;left:1046px;top:575px;" width="20" height="25" viewBox="0 0 20 25"><path d="M10 1 L18.2 8.5 V23 H1.8 V8.5 Z" fill="#2b2b2b" stroke="#5f6163" stroke-width="1.8"/><path d="M5 14.5 H15" stroke="#5f6163" stroke-width="2"/></svg>
<svg style="position:absolute;left:1046px;top:795px;" width="20" height="25" viewBox="0 0 20 25"><path d="M10 1 L18.2 8.5 V23 H1.8 V8.5 Z" fill="#2b2b2b" stroke="#5f6163" stroke-width="1.8"/><path d="M5 14.5 H15" stroke="#5f6163" stroke-width="2"/></svg>
<svg style="position:absolute;left:1046px;top:1015px;" width="20" height="25" viewBox="0 0 20 25"><path d="M10 1 L18.2 8.5 V23 H1.8 V8.5 Z" fill="#2b2b2b" stroke="#5f6163" stroke-width="1.8"/><path d="M5 14.5 H15" stroke="#5f6163" stroke-width="2"/></svg>
<svg style="position:absolute;left:1046px;top:1367px;" width="20" height="25" viewBox="0 0 20 25"><path d="M10 1 L18.2 8.5 V23 H1.8 V8.5 Z" fill="#2b2b2b" stroke="#5f6163" stroke-width="1.8"/><path d="M5 14.5 H15" stroke="#5f6163" stroke-width="2"/></svg>
<svg style="position:absolute;left:1046px;top:1631px;" width="20" height="25" viewBox="0 0 20 25"><path d="M10 1 L18.2 8.5 V23 H1.8 V8.5 Z" fill="#2b2b2b" stroke="#5f6163" stroke-width="1.8"/><path d="M5 14.5 H15" stroke="#5f6163" stroke-width="2"/></svg>
<div style="position:absolute;left:1068px;top:170px;width:1870px;height:1602px;overflow:hidden;font:400 30px 'Liberation Mono', monospace;line-height:44px;white-space:pre"><div style="position:absolute;left:0;top:3px;height:44px;transform:scaleX(0.88889);transform-origin:0 0"><span style="color:#a9b7c6">            </span><span style="color:#e8bf6a">&lt;version&gt;</span><span style="color:#a9b7c6">${project.version}</span><span style="color:#e8bf6a">&lt;/version&gt;</span></div><div style="position:absolute;left:0;top:47px;height:44px;transform:scaleX(0.88889);transform-origin:0 0"><span style="color:#a9b7c6">        </span><span style="color:#e8bf6a">&lt;/dependency&gt;</span></div><div style="position:absolute;left:0;top:91px;height:44px;transform:scaleX(0.88889);transform-origin:0 0"><span style="color:#808080">        &lt;!--   seatunnel-transforms-v2   --&gt;</span></div><div style="position:absolute;left:0;top:135px;height:44px;transform:scaleX(0.88889);transform-origin:0 0"></div><div style="position:absolute;left:0;top:179px;height:44px;transform:scaleX(0.88889);transform-origin:0 0"><span style="color:#808080">        &lt;!--   seatunnel-connector   --&gt;</span></div><div style="position:absolute;left:0;top:223px;height:44px;transform:scaleX(0.88889);transform-origin:0 0"><span style="color:#a9b7c6">        </span><span style="color:#e8bf6a">&lt;dependency&gt;</span></div><div style="position:absolute;left:0;top:267px;height:44px;transform:scaleX(0.88889);transform-origin:0 0"><span style="color:#a9b7c6">            </span><span style="color:#e8bf6a">&lt;groupId&gt;</span><span style="color:#a9b7c6">org.apache.seatunnel</span><span style="color:#e8bf6a">&lt;/groupId&gt;</span></div><div style="position:absolute;left:0;top:311px;height:44px;transform:scaleX(0.88889);transform-origin:0 0"><span style="color:#a9b7c6">            </span><span style="color:#e8bf6a">&lt;artifactId&gt;</span><span style="color:#a9b7c6">connector-fake</span><span style="color:#e8bf6a">&lt;/artifactId&gt;</span></div><div style="position:absolute;left:0;top:355px;height:44px;transform:scaleX(0.88889);transform-origin:0 0"><span style="color:#a9b7c6">            </span><span style="color:#e8bf6a">&lt;version&gt;</span><span style="color:#a9b7c6">${project.version}</span><span style="color:#e8bf6a">&lt;/version&gt;</span></div><div style="position:absolute;left:0;top:399px;height:44px;transform:scaleX(0.88889);transform-origin:0 0"><span style="color:#a9b7c6">        </span><span style="color:#e8bf6a">&lt;/dependency&gt;</span></div><div style="position:absolute;left:0;top:443px;height:44px;transform:scaleX(0.88889);transform-origin:0 0"><span style="color:#a9b7c6">        </span><span style="color:#e8bf6a">&lt;dependency&gt;</span></div><div style="position:absolute;left:0;top:487px;height:44px;transform:scaleX(0.88889);transform-origin:0 0"><span style="color:#a9b7c6">            </span><span style="color:#e8bf6a">&lt;groupId&gt;</span><span style="color:#a9b7c6">org.apache.seatunnel</span><span style="color:#e8bf6a">&lt;/groupId&gt;</span></div><div style="position:absolute;left:0;top:531px;height:44px;transform:scaleX(0.88889);transform-origin:0 0"><span style="color:#a9b7c6">            </span><span style="color:#e8bf6a">&lt;artifactId&gt;</span><span style="color:#a9b7c6">connector-console</span><span style="color:#e8bf6a">&lt;/artifactId&gt;</span></div><div style="position:absolute;left:0;top:575px;height:44px;transform:scaleX(0.88889);transform-origin:0 0"><span style="color:#a9b7c6">            </span><span style="color:#e8bf6a">&lt;version&gt;</span><span style="color:#a9b7c6">${project.version}</span><span style="color:#e8bf6a">&lt;/version&gt;</span></div><div style="position:absolute;left:0;top:619px;height:44px;transform:scaleX(0.88889);transform-origin:0 0"><span style="color:#a9b7c6">        </span><span style="color:#e8bf6a">&lt;/dependency&gt;</span></div><div style="position:absolute;left:0;top:663px;height:44px;transform:scaleX(0.88889);transform-origin:0 0"><span style="color:#a9b7c6">        </span><span style="color:#e8bf6a">&lt;dependency&gt;</span></div><div style="position:absolute;left:0;top:707px;height:44px;transform:scaleX(0.88889);transform-origin:0 0"><span style="color:#a9b7c6">            </span><span style="color:#e8bf6a">&lt;groupId&gt;</span><span style="color:#a9b7c6">org.apache.seatunnel</span><span style="color:#e8bf6a">&lt;/groupId&gt;</span></div><div style="position:absolute;left:0;top:751px;height:44px;transform:scaleX(0.88889);transform-origin:0 0"><span style="color:#a9b7c6">            </span><span style="color:#e8bf6a">&lt;artifactId&gt;</span><span style="color:#a9b7c6">connector-jdbc</span><span style="color:#e8bf6a">&lt;/artifactId&gt;</span></div><div style="position:absolute;left:0;top:795px;height:44px;transform:scaleX(0.88889);transform-origin:0 0"><span style="color:#a9b7c6">            </span><span style="color:#e8bf6a">&lt;version&gt;</span><span style="color:#a9b7c6">${project.version}</span><span style="color:#e8bf6a">&lt;/version&gt;</span></div><div style="position:absolute;left:0;top:839px;height:44px;transform:scaleX(0.88889);transform-origin:0 0"><span style="color:#a9b7c6">        </span><span style="color:#e8bf6a">&lt;/dependency&gt;</span></div><div style="position:absolute;left:0;top:883px;height:44px;transform:scaleX(0.88889);transform-origin:0 0"><span style="color:#808080">        &lt;!--   seatunnel connectors   --&gt;</span></div><div style="position:absolute;left:0;top:927px;height:44px;transform:scaleX(0.88889);transform-origin:0 0"><span style="color:#808080">        &lt;!--flink--&gt;</span></div><div style="position:absolute;left:0;top:971px;height:44px;transform:scaleX(0.88889);transform-origin:0 0"><span style="color:#a9b7c6">        </span><span style="color:#e8bf6a">&lt;dependency&gt;</span></div><div style="position:absolute;left:0;top:1015px;height:44px;transform:scaleX(0.88889);transform-origin:0 0"><span style="color:#a9b7c6">            </span><span style="color:#e8bf6a">&lt;groupId&gt;</span><span style="color:#a9b7c6">org.apache.flink</span><span style="color:#e8bf6a">&lt;/groupId&gt;</span></div><div style="position:absolute;left:0;top:1059px;height:44px;transform:scaleX(0.88889);transform-origin:0 0"><span style="color:#a9b7c6">            </span><span style="color:#e8bf6a">&lt;artifactId&gt;</span><span style="color:#a9b7c6">flink-java</span><span style="color:#e8bf6a">&lt;/artifactId&gt;</span></div><div style="position:absolute;left:0;top:1103px;height:44px;transform:scaleX(0.88889);transform-origin:0 0"><span style="color:#a9b7c6">            </span><span style="color:#e8bf6a">&lt;version&gt;</span><span style="color:#a9b7c6">${flink.1.13.6.version}</span><span style="color:#e8bf6a">&lt;/version&gt;</span></div><div style="position:absolute;left:0;top:1147px;height:44px;transform:scaleX(0.88889);transform-origin:0 0"><span style="color:#a9b7c6">            </span><span style="color:#e8bf6a">&lt;scope&gt;</span><span style="color:#a9b7c6">${flink.scope}</span><span style="color:#e8bf6a">&lt;/scope&gt;</span></div><div style="position:absolute;left:0;top:1191px;height:44px;transform:scaleX(0.88889);transform-origin:0 0"><span style="color:#a9b7c6">        </span><span style="color:#e8bf6a">&lt;/dependency&gt;</span></div><div style="position:absolute;left:0;top:1235px;height:44px;transform:scaleX(0.88889);transform-origin:0 0"><span style="color:#a9b7c6">        </span><span style="color:#e8bf6a">&lt;dependency&gt;</span></div><div style="position:absolute;left:0;top:1279px;height:44px;transform:scaleX(0.88889);transform-origin:0 0"><span style="color:#a9b7c6">            </span><span style="color:#e8bf6a">&lt;groupId&gt;</span><span style="color:#a9b7c6">org.apache.flink</span><span style="color:#e8bf6a">&lt;/groupId&gt;</span></div><div style="position:absolute;left:0;top:1323px;height:44px;transform:scaleX(0.88889);transform-origin:0 0"><span style="color:#a9b7c6">            </span><span style="color:#e8bf6a">&lt;artifactId&gt;</span><span style="color:#a9b7c6">flink-table-planner_${scala.binary.version}</span><span style="color:#e8bf6a">&lt;/artifactId&gt;</span></div><div style="position:absolute;left:0;top:1367px;height:44px;transform:scaleX(0.88889);transform-origin:0 0"><span style="color:#a9b7c6">            </span><span style="color:#e8bf6a">&lt;version&gt;</span><span style="color:#a9b7c6">${flink.1.13.6.version}</span><span style="color:#e8bf6a">&lt;/version&gt;</span></div><div style="position:absolute;left:0;top:1411px;height:44px;transform:scaleX(0.88889);transform-origin:0 0"><span style="color:#a9b7c6">            </span><span style="color:#e8bf6a">&lt;scope&gt;</span><span style="color:#a9b7c6">${flink.scope}</span><span style="color:#e8bf6a">&lt;/scope&gt;</span></div><div style="position:absolute;left:0;top:1455px;height:44px;transform:scaleX(0.88889);transform-origin:0 0"><span style="color:#a9b7c6">        </span><span style="color:#e8bf6a">&lt;/dependency&gt;</span></div><div style="position:absolute;left:0;top:1499px;height:44px;transform:scaleX(0.88889);transform-origin:0 0"><span style="color:#a9b7c6">        </span><span style="color:#e8bf6a">&lt;dependency&gt;</span></div><div style="position:absolute;left:0;top:1543px;height:44px;transform:scaleX(0.88889);transform-origin:0 0"><span style="color:#a9b7c6">            </span><span style="color:#e8bf6a">&lt;groupId&gt;</span><span style="color:#a9b7c6">org.apache.flink</span><span style="color:#e8bf6a">&lt;/groupId&gt;</span></div><div style="position:absolute;left:0;top:1587px;height:44px;transform:scaleX(0.88889);transform-origin:0 0"><span style="color:#a9b7c6">            </span><span style="color:#e8bf6a">&lt;artifactId&gt;</span><span style="color:#a9b7c6">flink-table-planner-blink_${scala.binary.version}</span><span style="color:#e8bf6a">&lt;/artifactId&gt;</span></div></div>
<div style="position:absolute;left:900px;top:170px;width:78px;height:1602px;overflow:hidden;font:400 30px 'Liberation Mono', monospace;line-height:44px;text-align:right"><div style="position:absolute;right:0;top:3px;color:#606366;transform:scaleX(0.8);transform-origin:100% 0">55</div><div style="position:absolute;right:0;top:47px;color:#606366;transform:scaleX(0.8);transform-origin:100% 0">56</div><div style="position:absolute;right:0;top:91px;color:#606366;transform:scaleX(0.8);transform-origin:100% 0">57</div><div style="position:absolute;right:0;top:135px;color:#606366;transform:scaleX(0.8);transform-origin:100% 0">58</div><div style="position:absolute;right:0;top:179px;color:#606366;transform:scaleX(0.8);transform-origin:100% 0">59</div><div style="position:absolute;right:0;top:223px;color:#606366;transform:scaleX(0.8);transform-origin:100% 0">60</div><div style="position:absolute;right:0;top:267px;color:#606366;transform:scaleX(0.8);transform-origin:100% 0">61</div><div style="position:absolute;right:0;top:311px;color:#606366;transform:scaleX(0.8);transform-origin:100% 0">62</div><div style="position:absolute;right:0;top:355px;color:#606366;transform:scaleX(0.8);transform-origin:100% 0">63</div><div style="position:absolute;right:0;top:399px;color:#606366;transform:scaleX(0.8);transform-origin:100% 0">64</div><div style="position:absolute;right:0;top:443px;color:#a4a3a3;transform:scaleX(0.8);transform-origin:100% 0">65</div><div style="position:absolute;right:0;top:487px;color:#606366;transform:scaleX(0.8);transform-origin:100% 0">66</div><div style="position:absolute;right:0;top:531px;color:#606366;transform:scaleX(0.8);transform-origin:100% 0">67</div><div style="position:absolute;right:0;top:575px;color:#606366;transform:scaleX(0.8);transform-origin:100% 0">68</div><div style="position:absolute;right:0;top:619px;color:#606366;transform:scaleX(0.8);transform-origin:100% 0">69</div><div style="position:absolute;right:0;top:663px;color:#606366;transform:scaleX(0.8);transform-origin:100% 0">70</div><div style="position:absolute;right:0;top:707px;color:#606366;transform:scaleX(0.8);transform-origin:100% 0">71</div><div style="position:absolute;right:0;top:751px;color:#606366;transform:scaleX(0.8);transform-origin:100% 0">72</div><div style="position:absolute;right:0;top:795px;color:#606366;transform:scaleX(0.8);transform-origin:100% 0">73</div><div style="position:absolute;right:0;top:839px;color:#606366;transform:scaleX(0.8);transform-origin:100% 0">74</div><div style="position:absolute;right:0;top:883px;color:#606366;transform:scaleX(0.8);transform-origin:100% 0">75</div><div style="position:absolute;right:0;top:927px;color:#606366;transform:scaleX(0.8);transform-origin:100% 0">76</div><div style="position:absolute;right:0;top:971px;color:#606366;transform:scaleX(0.8);transform-origin:100% 0">77</div><div style="position:absolute;right:0;top:1015px;color:#606366;transform:scaleX(0.8);transform-origin:100% 0">78</div><div style="position:absolute;right:0;top:1059px;color:#606366;transform:scaleX(0.8);transform-origin:100% 0">79</div><div style="position:absolute;right:0;top:1103px;color:#606366;transform:scaleX(0.8);transform-origin:100% 0">80</div><div style="position:absolute;right:0;top:1147px;color:#606366;transform:scaleX(0.8);transform-origin:100% 0">81</div><div style="position:absolute;right:0;top:1191px;color:#606366;transform:scaleX(0.8);transform-origin:100% 0">82</div><div style="position:absolute;right:0;top:1235px;color:#606366;transform:scaleX(0.8);transform-origin:100% 0">83</div><div style="position:absolute;right:0;top:1279px;color:#606366;transform:scaleX(0.8);transform-origin:100% 0">84</div><div style="position:absolute;right:0;top:1323px;color:#606366;transform:scaleX(0.8);transform-origin:100% 0">85</div><div style="position:absolute;right:0;top:1367px;color:#606366;transform:scaleX(0.8);transform-origin:100% 0">86</div><div style="position:absolute;right:0;top:1411px;color:#606366;transform:scaleX(0.8);transform-origin:100% 0">87</div><div style="position:absolute;right:0;top:1455px;color:#606366;transform:scaleX(0.8);transform-origin:100% 0">88</div><div style="position:absolute;right:0;top:1499px;color:#606366;transform:scaleX(0.8);transform-origin:100% 0">89</div><div style="position:absolute;right:0;top:1543px;color:#606366;transform:scaleX(0.8);transform-origin:100% 0">90</div><div style="position:absolute;right:0;top:1587px;color:#606366;transform:scaleX(0.8);transform-origin:100% 0">91</div></div>
<div style="position:absolute;left:1177px;top:836px;width:740px;height:224px;border:6.5px solid #fe1d15;border-radius:8px;box-sizing:border-box"></div>
<div style="position:absolute;left:2940px;top:890px;width:16px;height:442px;background:#4f4f4f;"></div>
<div style="position:absolute;left:2922px;top:1070px;width:4px;height:50px;background:#447152;"></div>
<svg style="position:absolute;left:948px;top:128px;" width="20" height="28" viewBox="0 0 20 28"><path d="M0 8 L8 0 V8 Z" fill="#909aa0"/><path d="M9.5 0 H20 V28 H0 V9.5 H9.5 Z" fill="#909aa0"/><path d="M4 13 H16 M4 17 H16 M4 21 H12" stroke="#3c3f41" stroke-width="2"/></svg>
<div style="position:absolute;left:979px;top:122.99px;font:400 26px 'Liberation Sans', sans-serif;line-height:40px;color:#6897bb;white-space:pre;transform:scaleX(0.9629);transform-origin:0 0;">jdbc_sqlserver_source_to_sink.conf</div>
<svg style="position:absolute;left:1391.5px;top:134.5px;" width="16" height="16" viewBox="0 0 16 16"><path d="M1 1 L15 15 M15 1 L1 15" stroke="#7b7e80" stroke-width="2"/></svg>
<svg style="position:absolute;left:1440px;top:128px;" width="30" height="30" viewBox="0 0 30 30"><path d="M4 8 L11.7 0 V8 Z" fill="#909aa0"/><path d="M13.7 0 H24 V14 H4 V10 H13.7 Z" fill="#909aa0"/><rect x="0" y="16" width="30" height="14" fill="#3d95b5"/><path d="M8.5 18.5 V25.3 Q8.5 27.5 6.2 27.5 H4.5" fill="none" stroke="#1f3540" stroke-width="2"/></svg>
<div style="position:absolute;left:1478px;top:122.99px;font:400 26px 'Liberation Sans', sans-serif;line-height:40px;color:#6897bb;white-space:pre;transform:scaleX(0.9515);transform-origin:0 0;">SeaTunnelApiExample.java</div>
<svg style="position:absolute;left:1795.5px;top:134.5px;" width="16" height="16" viewBox="0 0 16 16"><path d="M1 1 L15 15 M15 1 L1 15" stroke="#7b7e80" stroke-width="2"/></svg>
<div style="position:absolute;left:1826px;top:116px;width:200px;height:52px;background:#4e5254;"></div>
<div style="position:absolute;left:1826px;top:164px;width:200px;height:6px;background:#747a80;"></div>
<svg style="position:absolute;left:1842px;top:131px" width="32" height="22" viewBox="0 0 29 21" preserveAspectRatio="none"><path d="M0 21 L4.3 1.2 H9.5 L9.2 2.8 Q11.5 0.5 14.5 0.5 Q17.8 0.5 18.3 3.2 Q20.8 0.5 24 0.5 Q29.5 0.5 28.5 5.5 L25.2 21 H19.8 L22.7 7.5 Q23.1 5.5 21.4 5.5 Q19.3 5.5 18.7 8 L16 21 H10.6 L13.5 7.5 Q13.9 5.5 12.2 5.5 Q10.1 5.5 9.5 8 L6.7 21 Z" fill="#3a98c0"/></svg>
<div style="position:absolute;left:1883px;top:122.99px;font:400 26px 'Liberation Sans', sans-serif;line-height:40px;color:#6897bb;white-space:pre;transform:scaleX(0.9771);transform-origin:0 0;">pom.xml</div>
<svg style="position:absolute;left:1994px;top:134.5px;" width="16" height="16" viewBox="0 0 16 16"><path d="M1 1 L15 15 M15 1 L1 15" stroke="#7b7e80" stroke-width="2"/></svg>
<div style="position:absolute;left:2930px;top:131px;width:7px;height:7px;border-radius:50%;background:#afb1b3"></div>
<div style="position:absolute;left:2930px;top:139px;width:7px;height:7px;border-radius:50%;background:#afb1b3"></div>
<div style="position:absolute;left:2930px;top:147px;width:7px;height:7px;border-radius:50%;background:#afb1b3"></div>
<div style="position:absolute;left:906px;top:192px;width:16px;height:1094px;background:#5b5c5e;"></div>
<svg style="position:absolute;left:72px;top:130px;" width="28" height="26" viewBox="0 0 28 26"><rect x="1.5" y="1.5" width="25" height="23" fill="#3e86a0" stroke="#87939a" stroke-width="3"/><rect x="1.5" y="1.5" width="25" height="5" fill="#87939a"/></svg>
<div style="position:absolute;left:110px;top:123.99px;font:400 26px 'Liberation Sans', sans-serif;line-height:40px;color:#bbbbbb;white-space:pre;transform:scaleX(0.8846);transform-origin:0 0;">项目</div>
<svg style="position:absolute;left:188px;top:140px;" width="20" height="10" viewBox="0 0 20 10"><path d="M0 0 H20 L10 10 Z" fill="#afb1b3"/></svg>
<svg style="position:absolute;left:661px;top:127px;" width="30" height="30" viewBox="0 0 30 30"><circle cx="15" cy="15" r="12.5" fill="none" stroke="#afb1b3" stroke-width="3"/><path d="M15 1 V10 M15 20 V29 M1 15 H10 M20 15 H29" stroke="#afb1b3" stroke-width="3"/></svg>
<svg style="position:absolute;left:716px;top:128px;" width="24" height="28" viewBox="0 0 24 28"><rect x="0" y="0" width="24" height="4" fill="#afb1b3"/><rect x="0" y="24" width="24" height="4" fill="#afb1b3"/><path d="M5 12 L12 6 L19 12 Z M5 16 L12 22 L19 16 Z" fill="#afb1b3"/></svg>
<svg style="position:absolute;left:768px;top:130px;" width="24" height="24" viewBox="0 0 24 24"><rect x="0" y="10" width="24" height="4" fill="#afb1b3"/><path d="M5 0 H19 L12 7 Z M5 24 H19 L12 17 Z" fill="#afb1b3"/></svg>
<div style="position:absolute;left:812px;top:122px;width:2px;height:40px;background:#555759;"></div>
<svg style="position:absolute;left:833px;top:129px;" width="26" height="26" viewBox="0 0 26 26"><rect x="10" y="0" width="6" height="26" fill="#afb1b3" transform="rotate(0 13 13)"/><rect x="10" y="0" width="6" height="26" fill="#afb1b3" transform="rotate(60 13 13)"/><rect x="10" y="0" width="6" height="26" fill="#afb1b3" transform="rotate(120 13 13)"/><circle cx="13" cy="13" r="9.5" fill="#afb1b3"/><circle cx="13" cy="13" r="4.5" fill="#3c3f41"/></svg>
<div style="position:absolute;left:886px;top:140px;width:24px;height:4px;background:#afb1b3;"></div>
<svg style="position:absolute;left:934px;top:74px" width="31" height="20" viewBox="0 0 29 21" preserveAspectRatio="none"><path d="M0 21 L4.3 1.2 H9.5 L9.2 2.8 Q11.5 0.5 14.5 0.5 Q17.8 0.5 18.3 3.2 Q20.8 0.5 24 0.5 Q29.5 0.5 28.5 5.5 L25.2 21 H19.8 L22.7 7.5 Q23.1 5.5 21.4 5.5 Q19.3 5.5 18.7 8 L16 21 H10.6 L13.5 7.5 Q13.9 5.5 12.2 5.5 Q10.1 5.5 9.5 8 L6.7 21 Z" fill="#3a98c0"/></svg>
<svg style="position:absolute;left:1853px;top:72px;" width="30" height="30" viewBox="0 0 30 30"><ellipse cx="20.5" cy="7.8" rx="4.8" ry="6.3" fill="#afb1b3"/><path d="M17 16 Q28 17.5 29.5 25 H22 Z" fill="#afb1b3"/><g stroke="#3c3f41" stroke-width="1.6"><ellipse cx="13" cy="8.6" rx="5.6" ry="7" fill="#afb1b3"/><path d="M1 25 Q1 18.5 9.5 16.3 H16.5 Q25.5 18.5 25.5 25 Z" fill="#afb1b3"/></g><rect x="10" y="12" width="6" height="6" fill="#afb1b3"/></svg>
<svg style="position:absolute;left:1888px;top:83.5px;" width="16" height="9" viewBox="0 0 16 9"><path d="M0 0 H16 L8 9 Z" fill="#afb1b3"/></svg>
<div style="position:absolute;left:1920px;top:66px;width:2px;height:40px;background:#555759;"></div>
<svg style="position:absolute;left:1937px;top:70px;" width="32" height="32" viewBox="0 0 32 32"><path d="M0.9 13.3 L11.9 2 H19 V3.6 Q16.5 4.5 13.3 8.3 L31.1 24.9 L26.8 29.6 L9.2 13.1 L5.2 17.1 Z" fill="#499c54"/></svg>
<div style="position:absolute;left:1992px;top:64px;width:166px;height:44px;border:2px solid #5e6163;border-radius:7px;box-sizing:border-box"></div>
<div style="position:absolute;left:2011px;top:67.99px;font:400 26px 'Liberation Sans', sans-serif;line-height:40px;color:#bbbbbb;white-space:pre;transform:scaleX(0.9038);transform-origin:0 0;">当前文件</div>
<svg style="position:absolute;left:2121px;top:82px;" width="18" height="10" viewBox="0 0 18 10"><path d="M0 0 H18 L9 10 Z" fill="#afb1b3"/></svg>
<svg style="position:absolute;left:2186px;top:74px;" width="20" height="24" viewBox="0 0 20 24"><path d="M0 0 L20 12 L0 24 Z" fill="#5e6060"/></svg>
<svg style="position:absolute;left:2233px;top:72px;" width="25" height="28" viewBox="0 0 25 28"><path d="M4.5 1.5 L9 6 M20.5 1.5 L16 6" stroke="#5e6060" stroke-width="3.2"/><path d="M3.5 9 Q12.5 3 21.5 9 V22 Q12.5 31 3.5 22 Z" fill="#5e6060"/><rect x="0.8" y="8.8" width="24.2" height="2.9" fill="#5e6060"/><rect x="0.8" y="15.1" width="24.2" height="2.9" fill="#5e6060"/><rect x="0.8" y="22" width="24.2" height="2.8" fill="#5e6060"/><rect x="9.4" y="12.3" width="7.4" height="2.3" fill="#3c3f41"/><rect x="9.4" y="18.5" width="7.4" height="2.5" fill="#3c3f41"/></svg>
<svg style="position:absolute;left:2283px;top:72px;" width="32" height="32" viewBox="0 0 32 32"><path d="M0.5 2.5 Q10 0 20.5 2.5 V17 Q20.5 23.5 10.5 26.5 Q0.5 23.5 0.5 17 Z" fill="#5e6060"/><rect x="11.3" y="6" width="3.5" height="17" fill="#3c3f41"/><rect x="14.8" y="6" width="6" height="3" fill="#3c3f41"/><path d="M16 11.3 L31.5 21.2 L16 31.2 Z" fill="#5e6060" stroke="#3c3f41" stroke-width="2"/></svg>
<svg style="position:absolute;left:2336px;top:72px;" width="34" height="32" viewBox="0 0 34 32"><path d="M15 25.5 A12 12 0 1 1 26.5 14" fill="none" stroke="#5e6060" stroke-width="3"/><path d="M15 7 V14 L11.5 18" fill="none" stroke="#5e6060" stroke-width="2.6"/><path d="M17 11.3 L32.5 21.2 L17 31.2 Z" fill="#5e6060" stroke="#3c3f41" stroke-width="1.5"/></svg>
<svg style="position:absolute;left:2380px;top:83.5px;" width="16" height="9" viewBox="0 0 16 9"><path d="M0 0 H16 L8 9 Z" fill="#afb1b3"/></svg>
<div style="position:absolute;left:2422px;top:76px;width:20px;height:20px;background:#5e6060;"></div>
<div style="position:absolute;left:2464px;top:66px;width:2px;height:40px;background:#555759;"></div>
<div style="position:absolute;left:2485px;top:66.99px;font:400 26px 'Liberation Sans', sans-serif;line-height:40px;color:#bbbbbb;white-space:pre;transform:scaleX(0.9103);transform-origin:0 0;">Git(G):</div>
<svg style="position:absolute;left:2583px;top:73px;" width="24" height="24" viewBox="0 0 24 24"><path d="M21 2.5 L7 16.5" stroke="#3592c4" stroke-width="4"/><path d="M1 9.5 V23 H15 Z" fill="#3592c4"/></svg>
<svg style="position:absolute;left:2633px;top:75px;" width="29" height="22" viewBox="0 0 29 22"><path d="M2 11 L10 19 L27 2" fill="none" stroke="#499c54" stroke-width="4"/></svg>
<svg style="position:absolute;left:2685px;top:73px;" width="24" height="24" viewBox="0 0 24 24"><path d="M3 22.5 L17 8.5" stroke="#499c54" stroke-width="4"/><path d="M9.2 3 H23 V16.9 Z" fill="#499c54"/></svg>
<svg style="position:absolute;left:2735px;top:71px;" width="30" height="30" viewBox="0 0 30 30"><circle cx="15" cy="15" r="12.3" fill="none" stroke="#afb1b3" stroke-width="3.4"/><path d="M14.5 8 V16.5 L20 21" fill="none" stroke="#afb1b3" stroke-width="3"/></svg>
<svg style="position:absolute;left:2790px;top:72px;" width="28" height="28" viewBox="0 0 28 28"><path d="M0.3 8.4 L8 0.3 V15.9 Z" fill="#afb1b3"/><path d="M7 9.8 H17.5 A7 7 0 0 1 17.5 23.8 H7.9" fill="none" stroke="#afb1b3" stroke-width="3.5"/></svg>
<div style="position:absolute;left:2834px;top:66px;width:2px;height:40px;background:#555759;"></div>
<svg style="position:absolute;left:2853px;top:71px;" width="30" height="30" viewBox="0 0 30 30"><circle cx="12" cy="12" r="9" fill="none" stroke="#afb1b3" stroke-width="3.5"/><path d="M18 18 L28 28" stroke="#afb1b3" stroke-width="4"/></svg>
<svg style="position:absolute;left:2903px;top:69.5px;" width="34" height="34" viewBox="0 0 34 34"><circle cx="17" cy="17" r="16" fill="#f0a732"/><path d="M17 8 L25 16.5 H19 V26 H15 V16.5 H9 Z" fill="#fff"/></svg>
<svg style="position:absolute;left:2957px;top:72px;" width="30" height="30" viewBox="0 0 30 30"><defs><linearGradient id="cwa" x1="0" y1="0" x2="0" y2="1"><stop offset="0" stop-color="#f5f74a"/><stop offset="0.5" stop-color="#8fe08a"/><stop offset="1" stop-color="#25c6ea"/></linearGradient><linearGradient id="cwb" x1="0" y1="0" x2="1" y2="0.5"><stop offset="0" stop-color="#2fd08a"/><stop offset="1" stop-color="#1a90e8"/></linearGradient></defs><path d="M3.5 1.5 Q20 3 28.8 12 H19.5 Q14 5 3.5 1.5 Z" fill="url(#cwb)"/><path d="M28.8 12 Q20 22 5 26.5 Q16 20 19.5 12 Z" fill="#1e63d3"/><path d="M3.5 1.5 Q14 5 19.5 12 Q16 20 5 26.5 Q0 14 3.5 1.5 Z" fill="url(#cwa)"/></svg>
<div style="position:absolute;left:30px;top:174px;width:0;height:0"><div style="position:absolute;left:0;top:0;transform:rotate(-90deg) scaleX(0.7885);transform-origin:0 0;white-space:pre;font:400 26px 'Liberation Sans', sans-serif;line-height:40px;color:#dcdcdc;margin-top:0"><div style="position:relative;top:-25.5px">项目</div></div></div>
<svg style="position:absolute;left:12px;top:186px;" width="22" height="18" viewBox="0 0 22 18"><path d="M0 0 H9 L12 3 H22 V18 H0 Z" fill="#afb1b3"/></svg>
<div style="position:absolute;left:30px;top:288px;width:0;height:0"><div style="position:absolute;left:0;top:0;transform:rotate(-90deg) scaleX(0.8269);transform-origin:0 0;white-space:pre;font:400 26px 'Liberation Sans', sans-serif;line-height:40px;color:#bbbbbb;margin-top:0"><div style="position:relative;top:-25.5px">提交</div></div></div>
<svg style="position:absolute;left:10px;top:301px;" width="26" height="17" viewBox="0 0 26 17"><circle cx="13" cy="8.5" r="6" fill="none" stroke="#afb1b3" stroke-width="3.5"/><path d="M0 8.5 H6 M20 8.5 H26" stroke="#afb1b3" stroke-width="3.5"/></svg>
<div style="position:absolute;left:30px;top:450px;width:0;height:0"><div style="position:absolute;left:0;top:0;transform:rotate(-90deg) scaleX(0.8942);transform-origin:0 0;white-space:pre;font:400 26px 'Liberation Sans', sans-serif;line-height:40px;color:#bbbbbb;margin-top:0"><div style="position:relative;top:-25.5px">拉取请求</div></div></div>
<svg style="position:absolute;left:14px;top:460px;" width="21" height="23" viewBox="0 0 21 23"><rect x="0" y="0" width="4" height="22" fill="#afb1b3"/><path d="M4.6 8 L12 1 V15 Z" fill="#afb1b3"/><rect x="12" y="6" width="8" height="4" fill="#afb1b3"/><rect x="16" y="6" width="4" height="14" fill="#afb1b3"/></svg>
<div style="position:absolute;left:30px;top:1436px;width:0;height:0"><div style="position:absolute;left:0;top:0;transform:rotate(-90deg) scaleX(0.8654);transform-origin:0 0;white-space:pre;font:400 26px 'Liberation Sans', sans-serif;line-height:40px;color:#bbbbbb;margin-top:0"><div style="position:relative;top:-25.5px">书签</div></div></div>
<svg style="position:absolute;left:14px;top:1445px;" width="19" height="23" viewBox="0 0 19 23"><path d="M0 0 H19 V23 L9.5 15 L0 23 Z" fill="#afb1b3"/></svg>
<div style="position:absolute;left:30px;top:1641px;width:0;height:0"><div style="position:absolute;left:0;top:0;transform:rotate(-90deg) scaleX(0.9371);transform-origin:0 0;white-space:pre;font:400 26px 'Liberation Sans', sans-serif;line-height:40px;color:#bbbbbb;margin-top:0"><div style="position:relative;top:-25.5px">AWS Toolkit</div></div></div>
<svg style="position:absolute;left:5px;top:1652px;" width="36" height="26" viewBox="0 0 36 26"><text x="2.5" y="14.5" font-family="Liberation Sans" font-size="17" textLength="29" lengthAdjust="spacingAndGlyphs" fill="#eeeeee">aws</text><path d="M1.5 18 Q16 27 31 18.5" fill="none" stroke="#f90" stroke-width="2.5"/><path d="M28 16.5 L32.5 18 L30.5 22" fill="none" stroke="#f90" stroke-width="2"/></svg>
<div style="position:absolute;left:30px;top:1766px;width:0;height:0"><div style="position:absolute;left:0;top:0;transform:rotate(-90deg) scaleX(0.8365);transform-origin:0 0;white-space:pre;font:400 26px 'Liberation Sans', sans-serif;line-height:40px;color:#bbbbbb;margin-top:0"><div style="position:relative;top:-25.5px">结构</div></div></div>
<svg style="position:absolute;left:13px;top:1778px;" width="20" height="18" viewBox="0 0 20 18"><rect x="11" y="0" width="8.3" height="7.8" fill="#afb1b3"/><rect x="1" y="10" width="8" height="7.8" fill="#afb1b3"/><rect x="11" y="10" width="8.3" height="7.8" fill="#afb1b3"/></svg>
<svg style="position:absolute;left:2967px;top:139px" width="28" height="19" viewBox="0 0 29 21" preserveAspectRatio="none"><path d="M0 21 L4.3 1.2 H9.5 L9.2 2.8 Q11.5 0.5 14.5 0.5 Q17.8 0.5 18.3 3.2 Q20.8 0.5 24 0.5 Q29.5 0.5 28.5 5.5 L25.2 21 H19.8 L22.7 7.5 Q23.1 5.5 21.4 5.5 Q19.3 5.5 18.7 8 L16 21 H10.6 L13.5 7.5 Q13.9 5.5 12.2 5.5 Q10.1 5.5 9.5 8 L6.7 21 Z" fill="#afb1b3"/></svg>
<div style="position:absolute;left:2973px;top:171px;width:0;height:0"><div style="position:absolute;left:0;top:0;transform:rotate(90deg) scaleX(0.8969);transform-origin:0 0;white-space:pre;font:400 26px 'Liberation Sans', sans-serif;line-height:40px;color:#bbbbbb"><div style="position:relative;top:-25.5px">Maven</div></div></div>
<svg style="position:absolute;left:2969px;top:280px;" width="24" height="25" viewBox="0 0 24 25"><rect x="1" y="0.5" width="22" height="24" rx="10" ry="4.5" fill="#afb1b3"/><path d="M0 7.5 Q12 11 24 7.5 M0 16 Q12 19.5 24 16" fill="none" stroke="#3c3f41" stroke-width="1.8"/></svg>
<div style="position:absolute;left:2973px;top:313px;width:0;height:0"><div style="position:absolute;left:0;top:0;transform:rotate(90deg) scaleX(0.8590);transform-origin:0 0;white-space:pre;font:400 26px 'Liberation Sans', sans-serif;line-height:40px;color:#bbbbbb"><div style="position:relative;top:-25.5px">数据库</div></div></div>
<svg style="position:absolute;left:2969px;top:422px;" width="24" height="25" viewBox="0 0 24 25"><path d="M1 18 Q4.5 14 4.5 8 Q4.5 0.5 12 0.5 Q19.5 0.5 19.5 8 Q19.5 14 23 18 Z" fill="#afb1b3"/><path d="M8.5 19.5 H15.5 Q15 24 12 24 Q9 24 8.5 19.5 Z" fill="#afb1b3"/></svg>
<div style="position:absolute;left:2973px;top:453px;width:0;height:0"><div style="position:absolute;left:0;top:0;transform:rotate(90deg) scaleX(0.8654);transform-origin:0 0;white-space:pre;font:400 26px 'Liberation Sans', sans-serif;line-height:40px;color:#bbbbbb"><div style="position:relative;top:-25.5px">通知</div></div></div>
<div style="position:absolute;left:2730px;top:250px;width:112px;height:56px;border-radius:7px;background:#3c3f41"></div>
<svg style="position:absolute;left:2743px;top:262px" width="29" height="19" viewBox="0 0 29 21" preserveAspectRatio="none"><path d="M0 21 L4.3 1.2 H9.5 L9.2 2.8 Q11.5 0.5 14.5 0.5 Q17.8 0.5 18.3 3.2 Q20.8 0.5 24 0.5 Q29.5 0.5 28.5 5.5 L25.2 21 H19.8 L22.7 7.5 Q23.1 5.5 21.4 5.5 Q19.3 5.5 18.7 8 L16 21 H10.6 L13.5 7.5 Q13.9 5.5 12.2 5.5 Q10.1 5.5 9.5 8 L6.7 21 Z" fill="#bbbbbb"/></svg>
<svg style="position:absolute;left:2757px;top:276px;" width="20" height="18" viewBox="0 0 20 18"><path d="M3 9 A7 7 0 0 1 16 5" fill="none" stroke="#3592c4" stroke-width="3"/><path d="M17 9 A7 7 0 0 1 4 13" fill="none" stroke="#3592c4" stroke-width="3"/><path d="M13 1 L19 2 L17 8 Z M7 17 L1 16 L3 10 Z" fill="#3592c4"/></svg>
<svg style="position:absolute;left:2803.5px;top:269.5px;" width="17.0" height="17.0" viewBox="0 0 17.0 17.0"><path d="M1 1 L16.0 16.0 M16.0 1 L1 16.0" stroke="#6f7274" stroke-width="2"/></svg>
<div style="position:absolute;left:2776px;top:178.99px;font:400 26px 'Liberation Sans', sans-serif;line-height:40px;color:#7c7c7c;white-space:pre;transform:scaleX(0.9118);transform-origin:0 0;">正在编制索引...</div>
<div style="position:absolute;left:947px;top:1775.99px;font:400 26px 'Liberation Sans', sans-serif;line-height:40px;color:#bbbbbb;white-space:pre;transform:scaleX(1.0122);transform-origin:0 0;">project</div>
<svg style="position:absolute;left:1050px;top:1790px;" width="7" height="14" viewBox="0 0 7 14"><path d="M1 1 L6 7 L1 13" fill="none" stroke="#6f7274" stroke-width="1.6"/></svg>
<div style="position:absolute;left:1074px;top:1775.99px;font:400 26px 'Liberation Sans', sans-serif;line-height:40px;color:#bbbbbb;white-space:pre;transform:scaleX(0.9881);transform-origin:0 0;">dependencies</div>
<svg style="position:absolute;left:1257px;top:1790px;" width="7" height="14" viewBox="0 0 7 14"><path d="M1 1 L6 7 L1 13" fill="none" stroke="#6f7274" stroke-width="1.6"/></svg>
<div style="position:absolute;left:1282px;top:1775.99px;font:400 26px 'Liberation Sans', sans-serif;line-height:40px;color:#bbbbbb;white-space:pre;transform:scaleX(0.9951);transform-origin:0 0;">dependency</div>
<svg style="position:absolute;left:64px;top:1832px;" width="18" height="28" viewBox="0 0 18 28"><circle cx="4" cy="25" r="3.5" fill="#afb1b3"/><circle cx="4" cy="3.5" r="3.5" fill="#afb1b3"/><circle cx="15" cy="9" r="3" fill="#afb1b3"/><path d="M4 3 V25 M15 9 Q15 18 4 20" fill="none" stroke="#afb1b3" stroke-width="3"/></svg>
<div style="position:absolute;left:94px;top:1824.99px;font:400 26px 'Liberation Sans', sans-serif;line-height:40px;color:#bbbbbb;white-space:pre;transform:scaleX(0.9027);transform-origin:0 0;">Git</div>
<svg style="position:absolute;left:166px;top:1835px;" width="21" height="18" viewBox="0 0 21 18"><path d="M0 1.5 H3 M6 1.5 H21 M0 9 H3 M6 9 H21 M0 16.5 H3 M6 16.5 H21" stroke="#afb1b3" stroke-width="3"/></svg>
<div style="position:absolute;left:197px;top:1824.99px;font:400 26px 'Liberation Sans', sans-serif;line-height:40px;color:#bbbbbb;white-space:pre;transform:scaleX(0.8574);transform-origin:0 0;">TODO</div>
<svg style="position:absolute;left:304px;top:1832px;" width="22" height="22" viewBox="0 0 22 22"><circle cx="11" cy="11" r="10.5" fill="#afb1b3"/><rect x="9" y="4" width="4" height="9" fill="#3c3f41"/><rect x="9" y="15" width="4" height="3.5" fill="#3c3f41"/></svg>
<div style="position:absolute;left:336px;top:1824.99px;font:400 26px 'Liberation Sans', sans-serif;line-height:40px;color:#bbbbbb;white-space:pre;transform:scaleX(0.8462);transform-origin:0 0;">问题</div>
<svg style="position:absolute;left:418px;top:1834px;" width="22" height="20" viewBox="0 0 22 20"><rect x="0" y="0" width="22" height="20" fill="#afb1b3"/><path d="M3 4 L8 8 L3 12 M9 15 H17" fill="none" stroke="#3c3f41" stroke-width="2"/></svg>
<div style="position:absolute;left:450px;top:1824.99px;font:400 26px 'Liberation Sans', sans-serif;line-height:40px;color:#bbbbbb;white-space:pre;transform:scaleX(0.8269);transform-origin:0 0;">终端</div>
<svg style="position:absolute;left:529px;top:1831px;" width="27" height="25" viewBox="0 0 27 25"><path d="M7 0 H20 L27 12.5 L20 25 H7 L0 12.5 Z" fill="#afb1b3"/><path d="M10 6 L19 12.5 L10 19 Z" fill="#3c3f41"/></svg>
<div style="position:absolute;left:564px;top:1824.99px;font:400 26px 'Liberation Sans', sans-serif;line-height:40px;color:#bbbbbb;white-space:pre;transform:scaleX(0.8269);transform-origin:0 0;">服务</div>
<svg style="position:absolute;left:646px;top:1831px;" width="26" height="27" viewBox="0 0 26 27"><circle cx="11" cy="11" r="9" fill="none" stroke="#afb1b3" stroke-width="3"/><path d="M11 5 V11 L14 14" fill="none" stroke="#afb1b3" stroke-width="2"/><path d="M11 10 L25 18 L11 26 Z" fill="#afb1b3" stroke="#3c3f41" stroke-width="2"/></svg>
<div style="position:absolute;left:681px;top:1824.99px;font:400 26px 'Liberation Sans', sans-serif;line-height:40px;color:#bbbbbb;white-space:pre;transform:scaleX(0.8985);transform-origin:0 0;">Profiler</div>
<svg style="position:absolute;left:794px;top:1831px;" width="26" height="26" viewBox="0 0 26 26"><path d="M1 7 L8 0 L14 4 L10 8 L25 22 L22 25 L7 11 L4 14 Z" fill="#afb1b3"/></svg>
<div style="position:absolute;left:828px;top:1824.99px;font:400 26px 'Liberation Sans', sans-serif;line-height:40px;color:#bbbbbb;white-space:pre;transform:scaleX(0.8269);transform-origin:0 0;">构建</div>
<svg style="position:absolute;left:914px;top:1833px;" width="25" height="26" viewBox="0 0 25 26"><path d="M12.5 0 L25 6 L12.5 12 L0 6 Z" fill="#afb1b3"/><path d="M1 11 L12.5 17 L24 11 M1 16 L12.5 22 L24 16" fill="none" stroke="#afb1b3" stroke-width="3"/></svg>
<div style="position:absolute;left:949px;top:1824.99px;font:400 26px 'Liberation Sans', sans-serif;line-height:40px;color:#bbbbbb;white-space:pre;transform:scaleX(0.8843);transform-origin:0 0;">Dependencies</div>
<svg style="position:absolute;left:23px;top:1874px;" width="26" height="24" viewBox="0 0 26 24"><path d="M6 2 H24 V20 H6 Z" fill="none" stroke="#afb1b3" stroke-width="2.5"/><path d="M2 6 V23 H19" fill="none" stroke="#afb1b3" stroke-width="2.5"/></svg>
<div style="position:absolute;left:892px;top:1865.99px;font:400 26px 'Liberation Sans', sans-serif;line-height:40px;color:#bbbbbb;white-space:pre;transform:scaleX(0.9231);transform-origin:0 0;">正在为库</div>
<div style="position:absolute;left:996px;top:1865.99px;font:400 26px 'Liberation Sans', sans-serif;line-height:40px;color:#bbbbbb;white-space:pre;transform:scaleX(0.9965);transform-origin:0 0;">&#x27;Maven: org.apache.hadoop:hadoop-client-runtime:3.3.2&#x27;</div>
<div style="position:absolute;left:1652px;top:1865.99px;font:400 26px 'Liberation Sans', sans-serif;line-height:40px;color:#bbbbbb;white-space:pre;transform:scaleX(0.9038);transform-origin:0 0;">编制索引</div>
<div style="position:absolute;left:1764px;top:1882px;width:291px;height:8px;border-radius:4px;background:#555759"></div>
<div style="position:absolute;left:1764px;top:1882px;width:100px;height:8px;border-radius:4px;background:#a0a0a0"></div>
<div style="position:absolute;left:2072px;top:1874px;width:5px;height:24px;background:#6f7274;"></div>
<div style="position:absolute;left:2083px;top:1874px;width:5px;height:24px;background:#6f7274;"></div>
<div style="position:absolute;left:2117px;top:1865.99px;font:400 26px 'Liberation Sans', sans-serif;line-height:40px;color:#bbbbbb;white-space:pre;transform:scaleX(0.9738);transform-origin:0 0;">AWS: No credentials selected</div>
<div style="position:absolute;left:2477px;top:1865.99px;font:400 26px 'Liberation Sans', sans-serif;line-height:40px;color:#bbbbbb;white-space:pre;transform:scaleX(0.9066);transform-origin:0 0;">65:21</div>
<div style="position:absolute;left:2563px;top:1865.99px;font:400 26px 'Liberation Sans', sans-serif;line-height:40px;color:#bbbbbb;white-space:pre;transform:scaleX(0.8099);transform-origin:0 0;">CRLF</div>
<div style="position:absolute;left:2645px;top:1865.99px;font:400 26px 'Liberation Sans', sans-serif;line-height:40px;color:#808080;white-space:pre;transform:scaleX(0.9094);transform-origin:0 0;">UTF-8</div>
<div style="position:absolute;left:2738px;top:1865.99px;font:400 26px 'Liberation Sans', sans-serif;line-height:40px;color:#bbbbbb;white-space:pre;transform:scaleX(0.9329);transform-origin:0 0;">4 个空格</div>
<svg style="position:absolute;left:2857px;top:1873px;" width="23" height="28" viewBox="0 0 23 28"><circle cx="4" cy="24" r="3.5" fill="#afb1b3"/><circle cx="4" cy="4" r="3.5" fill="#afb1b3"/><circle cx="18" cy="7" r="3.5" fill="#afb1b3"/><path d="M4 4 V24 M18 7 Q18 17 4 19" fill="none" stroke="#afb1b3" stroke-width="3"/></svg>
<div style="position:absolute;left:2891px;top:1865.99px;font:400 26px 'Liberation Sans', sans-serif;line-height:40px;color:#bbbbbb;white-space:pre;transform:scaleX(0.9542);transform-origin:0 0;">dev</div>
<svg style="position:absolute;left:2951px;top:1874px;" width="24" height="24" viewBox="0 0 24 24"><path d="M3 12 V7 Q3 2 8 2 Q13 2 13 7 V10" fill="none" stroke="#afb1b3" stroke-width="3"/><rect x="8" y="11" width="16" height="13" fill="#afb1b3"/></svg>
<!--end-->
</body></html>
